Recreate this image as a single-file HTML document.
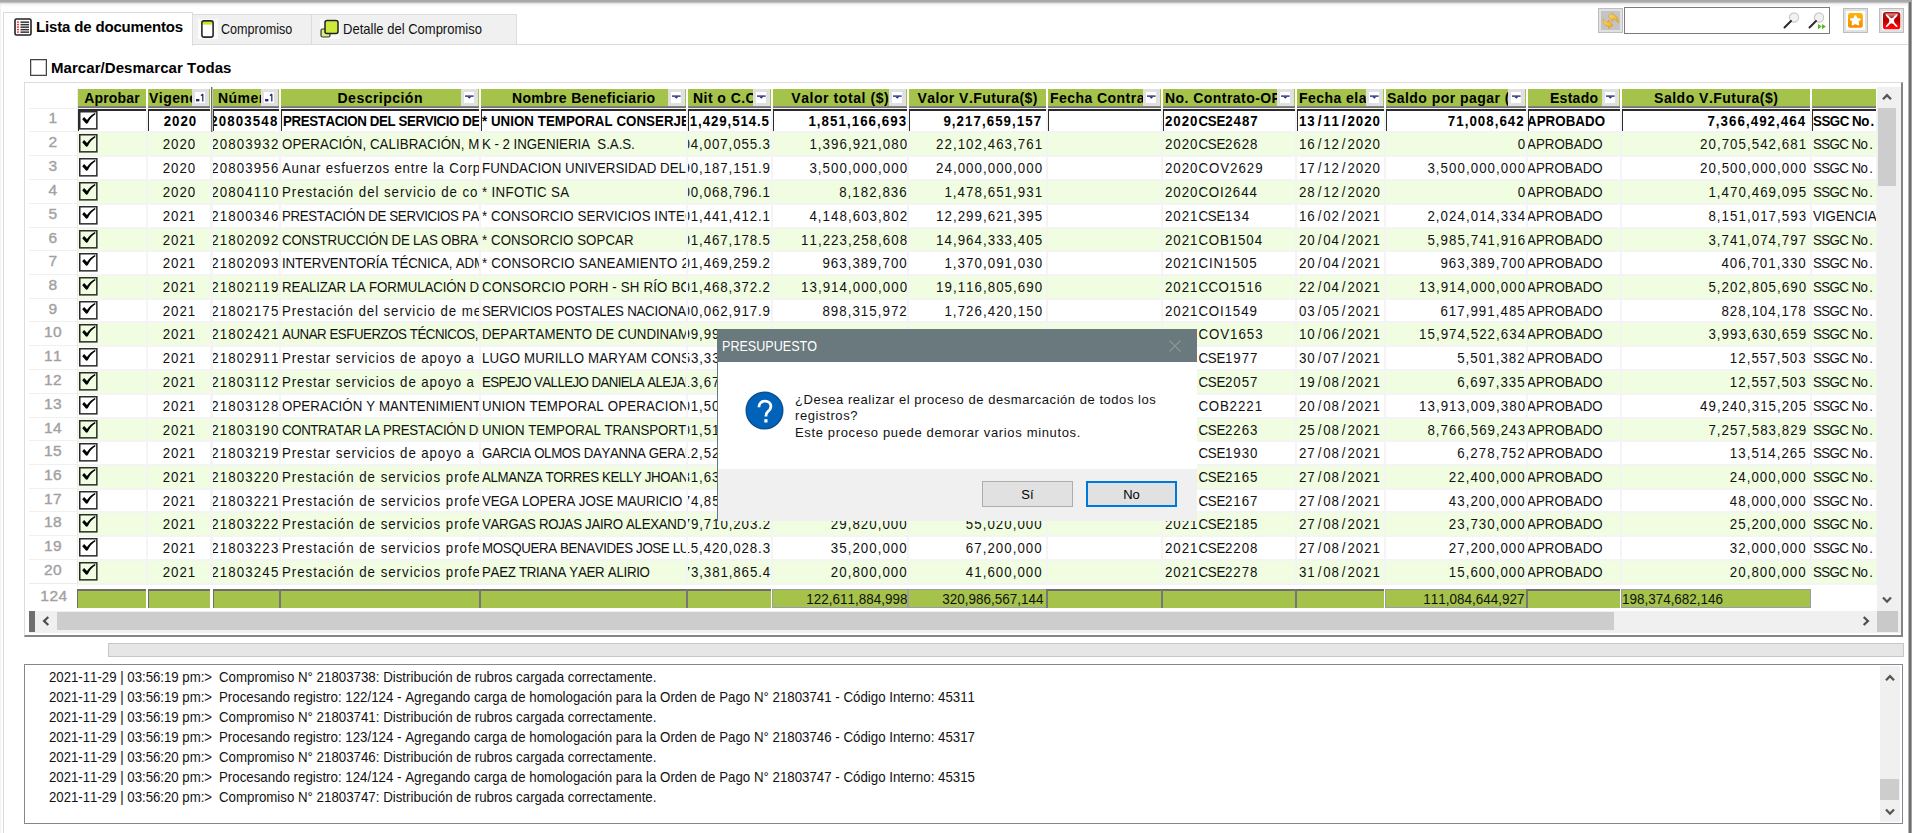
<!DOCTYPE html>
<html><head><meta charset="utf-8"><title>Presupuesto</title>
<style>
html,body{margin:0;padding:0;}
body{width:1912px;height:833px;overflow:hidden;background:#fff;position:relative;font-family:"Liberation Sans",sans-serif;font-size:14px;color:#000;font-kerning:none;font-variant-ligatures:none;}
div,span{position:absolute;box-sizing:border-box;white-space:pre;}
.c{overflow:hidden;}
.t{font-size:14.3px;line-height:22px;top:0;height:22px;color:#111;transform:scaleX(.93);transform-origin:0 50%;}
.b{font-weight:bold;color:#000;}
.h{font-weight:bold;font-size:14px;line-height:17px;top:1px;height:16px;}
.n{font-size:15px;transform-origin:0 50%;transform:scaleX(.885);color:#111;}
.rn{color:#a0a0a0;font-size:15.5px;line-height:22px;text-align:center;letter-spacing:.5px;-webkit-text-stroke:.4px #a4a4a4;margin-top:-1.6px;}
u{text-decoration:none;}
svg{position:absolute;overflow:visible;}
</style></head><body>

<div style="left:0px;top:0px;width:1912px;height:4px;background:linear-gradient(#a9a9a9 0,#a9a9a9 45%,#f4f4f4 100%);"></div>
<div style="left:0px;top:4px;width:1912px;height:2px;background:#f7f7f7;"></div>
<div style="left:1908px;top:2px;width:4px;height:831px;background:linear-gradient(to right,#b4b4b4 0,#b4b4b4 1px,#6f6f6f 1px,#6f6f6f 3px,#a2a2a2 3px);"></div>
<div style="left:0px;top:4px;width:1px;height:829px;background:#f1f1f1;"></div>
<div style="left:3px;top:44px;width:1905px;height:789px;border:1px solid #dcdcdc;border-bottom:none;border-right:none;background:#fff;"></div>
<div style="left:3px;top:12px;width:190px;height:34px;border:1px solid #dcdcdc;border-bottom:none;background:#fff;"></div>
<div style="left:193px;top:14px;width:119px;height:31px;background:#f0f0f0;border:1px solid #dcdcdc;border-left:none;"></div>
<div style="left:312px;top:14px;width:205px;height:31px;background:#f0f0f0;border:1px solid #dcdcdc;border-left:none;"></div>
<svg style="left:14px;top:18px" width="18" height="18" viewBox="0 0 18 18"><rect x="1" y="1" width="16" height="16" rx="1.5" fill="#fff" stroke="#222" stroke-width="1.6"/><rect x="3" y="3.4" width="2" height="1.4" fill="#f33"/><rect x="6.5" y="3.4" width="8.5" height="1.5" fill="#333"/><rect x="3" y="5.9" width="2" height="1.4" fill="#f33"/><rect x="6.5" y="5.9" width="8.5" height="1.5" fill="#333"/><rect x="3" y="8.4" width="2" height="1.4" fill="#f33"/><rect x="6.5" y="8.4" width="8.5" height="1.5" fill="#333"/><rect x="3" y="10.9" width="2" height="1.4" fill="#f33"/><rect x="6.5" y="10.9" width="8.5" height="1.5" fill="#333"/><rect x="3" y="13.4" width="2" height="1.4" fill="#f33"/><rect x="6.5" y="13.4" width="8.5" height="1.5" fill="#333"/></svg>
<span style="left:36px;top:16px;font-weight:bold;font-size:15px;line-height:20px;letter-spacing:-0.159px;margin-top:.5px;">Lista de documentos</span>
<div style="left:198px;top:19px;width:20px;height:20px;background:#fbfbfb;"></div>
<svg style="left:201px;top:20px" width="13" height="18" viewBox="0 0 13 18"><rect x=".9" y=".9" width="11.2" height="16.2" rx="2" fill="#fff" stroke="#262626" stroke-width="1.6"/><rect x="2" y="2" width="9" height="2.6" fill="#c6e81e"/></svg>
<span class="n" style="left:221px;top:19.4px;line-height:20px;transform:scaleX(.838);">Compromiso</span>
<div style="left:320px;top:19px;width:20px;height:20px;background:#fbfbfb;"></div>
<svg style="left:320px;top:19px" width="20" height="20" viewBox="0 0 20 20"><rect x="1" y="10" width="9" height="8" rx="1.5" fill="#d9ee80" stroke="#333" stroke-width="1.2"/><rect x="5" y="1.5" width="13" height="13" rx="2" fill="#cdea3a" stroke="#222" stroke-width="1.5"/></svg>
<span class="n" style="left:343px;top:19.4px;line-height:20px;transform:scaleX(.868);">Detalle del Compromiso</span>
<div style="left:1598px;top:8px;width:25px;height:25px;background:#c4c4c4;border:3px solid #e1e1e1;outline:1px solid #bdbdbd;outline-offset:-1px;"></div>
<svg style="left:1602px;top:12px" width="17" height="17" viewBox="0 0 17 17"><defs><linearGradient id="gg" x1="0" y1="0" x2="1" y2="1"><stop offset="0" stop-color="#ffe27a"/><stop offset="1" stop-color="#e8a21a"/></linearGradient></defs><path d="M6.3 4.2 L10.6 .9 L10.6 3 C13.8 3 16.3 5.6 16.2 10.8 C14.6 8.2 12.8 7.2 10.6 7.2 L10.6 9.4 Z" fill="url(#gg)" stroke="#d9961a" stroke-width=".6"/><path d="M10.9 13.2 L6.6 16.5 L6.6 14.4 C3.4 14.4 .9 11.8 1 6.6 C2.6 9.2 4.4 10.2 6.6 10.2 L6.6 8 Z" fill="url(#gg)" stroke="#d9961a" stroke-width=".6"/></svg>
<div style="left:1624px;top:7px;width:206px;height:27px;background:#fff;border:1px solid #7a7a7a;"></div>
<svg style="left:1782px;top:11px" width="22" height="20" viewBox="0 0 22 20"><circle cx="12" cy="6.5" r="4.6" fill="#f1f1f1" stroke="#c9c9c9" stroke-width="1.2"/><path d="M9 10 L2.5 16.5" stroke="#2a2a2a" stroke-width="2" stroke-linecap="round"/></svg>
<svg style="left:1807px;top:11px" width="22" height="20" viewBox="0 0 22 20"><circle cx="12" cy="6.5" r="4.6" fill="#f1f1f1" stroke="#c9c9c9" stroke-width="1.2"/><path d="M9 10 L2.5 16.5" stroke="#2a2a2a" stroke-width="2" stroke-linecap="round"/></svg>
<svg style="left:1818px;top:24px" width="8" height="6" viewBox="0 0 8 6"><path d="M0 0 L3.8 2.6 L0 5.2 Z M4 0 L7.8 2.6 L4 5.2 Z" fill="#59b81c"/></svg>
<div style="left:1843px;top:8px;width:25px;height:25px;background:#fff;border:3px solid #e1e1e1;outline:1px solid #bdbdbd;outline-offset:-1px;"></div>
<svg style="left:1848px;top:13px" width="15" height="15" viewBox="0 0 15 15"><defs><linearGradient id="og" x1="0" y1="0" x2="0" y2="1"><stop offset="0" stop-color="#fdb608"/><stop offset="1" stop-color="#fb8800"/></linearGradient></defs><rect width="14.8" height="14.8" rx="2.2" fill="url(#og)"/><path d="M7.4 3.2 L8.7 6 L11.8 6.3 L9.6 8.4 L10.2 11.4 L7.4 9.9 L4.6 11.4 L5.2 8.4 L3 6.3 L6.1 6 Z" fill="#fbfffd" stroke="#fbfffd" stroke-width="2" stroke-linejoin="round"/></svg>
<div style="left:1879px;top:8px;width:25px;height:25px;background:#fff;border:3px solid #e1e1e1;outline:1px solid #bdbdbd;outline-offset:-1px;"></div>
<svg style="left:1883px;top:12px" width="17.3" height="17.3" viewBox="0 0 17.3 17.3"><defs><linearGradient id="rg" x1="0" y1="0" x2="0" y2="1"><stop offset="0" stop-color="#b51616"/><stop offset=".45" stop-color="#b00000"/><stop offset=".75" stop-color="#f40000"/><stop offset="1" stop-color="#ff0a0a"/></linearGradient><linearGradient id="gl" x1="0" y1="0" x2="0" y2="1"><stop offset="0" stop-color="#fff" stop-opacity=".55"/><stop offset="1" stop-color="#fff" stop-opacity=".12"/></linearGradient></defs><rect width="17.3" height="17.3" rx="2.6" fill="url(#rg)"/><path d="M2 1.4 H15.3 L12.6 5.6 H4.7 Z" fill="url(#gl)"/><path d="M3.5 3 Q8.65 10.8 13.8 3 Q6.5 8.65 13.8 14.3 Q8.65 6.5 3.5 14.3 Q10.8 8.65 3.5 3 Z" fill="#fff" stroke="#fff" stroke-width="1.5" stroke-linejoin="round"/></svg>
<div style="left:30px;top:59px;width:17px;height:17px;background:#fff;border:1px solid #444;box-shadow:inset 0 0 0 .5px #999;"></div>
<span style="left:51px;top:57.5px;font-weight:bold;font-size:15px;line-height:20px;letter-spacing:0.056px;">Marcar/Desmarcar Todas</span>
<div style="left:24px;top:82px;width:1879px;height:555px;border:1px solid #dcdcdc;border-bottom:2px solid #858585;border-right:2px solid #858585;background:#fff;"></div>
<div style="left:29px;top:108px;width:1848px;height:477px;background:#f4f4f4;"></div>
<div style="left:29px;top:108px;width:48px;height:477px;background:#fff;"></div>
<div style="left:78px;top:89px;width:68px;height:17px;background:#a5c34a;overflow:hidden;"><span class="h" style="left:0;width:68px;text-align:center;overflow:hidden;letter-spacing:0.165px;text-indent:0.165px;">Aprobar</span></div>
<div style="left:78px;top:106px;width:68px;height:2px;background:linear-gradient(#8a8a8a,#6c6c6c);"></div>
<div style="left:148px;top:89px;width:62px;height:17px;background:#a5c34a;overflow:hidden;"><span class="h" style="left:1px;width:44px;overflow:hidden;letter-spacing:0.45px;">Vigencia</span><div style="left:44px;top:0px;width:17px;height:17px;background:#fff;border:3px solid #e0e0e0;border-right-width:4px;"></div><svg style="left:48px;top:4px" width="10" height="10" viewBox="0 0 10 10"><rect x="0" y="6" width="3.4" height="2.4" fill="#23307f"/><path d="M6.8 1 V8.6 M5 2.8 L6.8 1" stroke="#23307f" stroke-width="1.3" fill="none"/></svg></div>
<div style="left:148px;top:106px;width:62px;height:2px;background:linear-gradient(#8a8a8a,#6c6c6c);"></div>
<div style="left:213px;top:89px;width:66px;height:17px;background:#a5c34a;overflow:hidden;"><span class="h" style="left:5px;width:44px;overflow:hidden;letter-spacing:0.45px;">Número</span><div style="left:48px;top:0px;width:17px;height:17px;background:#fff;border:3px solid #e0e0e0;border-right-width:4px;"></div><svg style="left:52px;top:4px" width="10" height="10" viewBox="0 0 10 10"><rect x="0" y="6" width="3.4" height="2.4" fill="#23307f"/><path d="M6.8 1 V8.6 M5 2.8 L6.8 1" stroke="#23307f" stroke-width="1.3" fill="none"/></svg></div>
<div style="left:213px;top:106px;width:66px;height:2px;background:linear-gradient(#8a8a8a,#6c6c6c);"></div>
<div style="left:281px;top:89px;width:198px;height:17px;background:#a5c34a;overflow:hidden;"><span class="h" style="left:0;width:198px;text-align:center;overflow:hidden;letter-spacing:0.478px;text-indent:0.478px;">Descripción</span><div style="left:180px;top:0px;width:17px;height:17px;background:#fff;border:3px solid #e0e0e0;border-right-width:4px;"></div><svg style="left:184px;top:6px" width="9" height="6" viewBox="0 0 9 6"><path d="M0 .4 H8.6 V1.8 H0 Z" fill="#23307f"/><path d="M2.3 1.8 H6.3 L4.3 3.8 Z" fill="#23307f"/></svg></div>
<div style="left:281px;top:106px;width:198px;height:2px;background:linear-gradient(#8a8a8a,#6c6c6c);"></div>
<div style="left:481px;top:89px;width:205px;height:17px;background:#a5c34a;overflow:hidden;"><span class="h" style="left:0;width:205px;text-align:center;overflow:hidden;letter-spacing:0.341px;text-indent:0.341px;">Nombre Beneficiario</span><div style="left:187px;top:0px;width:17px;height:17px;background:#fff;border:3px solid #e0e0e0;border-right-width:4px;"></div><svg style="left:191px;top:6px" width="9" height="6" viewBox="0 0 9 6"><path d="M0 .4 H8.6 V1.8 H0 Z" fill="#23307f"/><path d="M2.3 1.8 H6.3 L4.3 3.8 Z" fill="#23307f"/></svg></div>
<div style="left:481px;top:106px;width:205px;height:2px;background:linear-gradient(#8a8a8a,#6c6c6c);"></div>
<div style="left:688px;top:89px;width:83px;height:17px;background:#a5c34a;overflow:hidden;"><span class="h" style="left:5px;width:61px;overflow:hidden;letter-spacing:0.45px;">Nit o C.C</span><div style="left:65px;top:0px;width:17px;height:17px;background:#fff;border:3px solid #e0e0e0;border-right-width:4px;"></div><svg style="left:69px;top:6px" width="9" height="6" viewBox="0 0 9 6"><path d="M0 .4 H8.6 V1.8 H0 Z" fill="#23307f"/><path d="M2.3 1.8 H6.3 L4.3 3.8 Z" fill="#23307f"/></svg></div>
<div style="left:688px;top:106px;width:83px;height:2px;background:linear-gradient(#8a8a8a,#6c6c6c);"></div>
<div style="left:773px;top:89px;width:134px;height:17px;background:#a5c34a;overflow:hidden;"><span class="h" style="left:0;width:134px;text-align:center;overflow:hidden;letter-spacing:0.57px;text-indent:0.57px;">Valor total ($)</span><div style="left:116px;top:0px;width:17px;height:17px;background:#fff;border:3px solid #e0e0e0;border-right-width:4px;"></div><svg style="left:120px;top:6px" width="9" height="6" viewBox="0 0 9 6"><path d="M0 .4 H8.6 V1.8 H0 Z" fill="#23307f"/><path d="M2.3 1.8 H6.3 L4.3 3.8 Z" fill="#23307f"/></svg></div>
<div style="left:773px;top:106px;width:134px;height:2px;background:linear-gradient(#8a8a8a,#6c6c6c);"></div>
<div style="left:909px;top:89px;width:137px;height:17px;background:#a5c34a;overflow:hidden;"><span class="h" style="left:0;width:137px;text-align:center;overflow:hidden;letter-spacing:0.45px;text-indent:0.45px;">Valor V.Futura($)</span></div>
<div style="left:909px;top:106px;width:137px;height:2px;background:linear-gradient(#8a8a8a,#6c6c6c);"></div>
<div style="left:1048px;top:89px;width:113px;height:17px;background:#a5c34a;overflow:hidden;"><span class="h" style="left:2px;width:94px;overflow:hidden;letter-spacing:0.45px;">Fecha Contrato</span><div style="left:95px;top:0px;width:17px;height:17px;background:#fff;border:3px solid #e0e0e0;border-right-width:4px;"></div><svg style="left:99px;top:6px" width="9" height="6" viewBox="0 0 9 6"><path d="M0 .4 H8.6 V1.8 H0 Z" fill="#23307f"/><path d="M2.3 1.8 H6.3 L4.3 3.8 Z" fill="#23307f"/></svg></div>
<div style="left:1048px;top:106px;width:113px;height:2px;background:linear-gradient(#8a8a8a,#6c6c6c);"></div>
<div style="left:1163px;top:89px;width:132px;height:17px;background:#a5c34a;overflow:hidden;"><span class="h" style="left:2px;width:113px;overflow:hidden;letter-spacing:0.45px;">No. Contrato-OP</span><div style="left:114px;top:0px;width:17px;height:17px;background:#fff;border:3px solid #e0e0e0;border-right-width:4px;"></div><svg style="left:118px;top:6px" width="9" height="6" viewBox="0 0 9 6"><path d="M0 .4 H8.6 V1.8 H0 Z" fill="#23307f"/><path d="M2.3 1.8 H6.3 L4.3 3.8 Z" fill="#23307f"/></svg></div>
<div style="left:1163px;top:106px;width:132px;height:2px;background:linear-gradient(#8a8a8a,#6c6c6c);"></div>
<div style="left:1297px;top:89px;width:87px;height:17px;background:#a5c34a;overflow:hidden;"><span class="h" style="left:2px;width:68px;overflow:hidden;letter-spacing:0.45px;">Fecha elab</span><div style="left:69px;top:0px;width:17px;height:17px;background:#fff;border:3px solid #e0e0e0;border-right-width:4px;"></div><svg style="left:73px;top:6px" width="9" height="6" viewBox="0 0 9 6"><path d="M0 .4 H8.6 V1.8 H0 Z" fill="#23307f"/><path d="M2.3 1.8 H6.3 L4.3 3.8 Z" fill="#23307f"/></svg></div>
<div style="left:1297px;top:106px;width:87px;height:2px;background:linear-gradient(#8a8a8a,#6c6c6c);"></div>
<div style="left:1386px;top:89px;width:140px;height:17px;background:#a5c34a;overflow:hidden;"><span class="h" style="left:1px;width:122px;overflow:hidden;letter-spacing:0.45px;">Saldo por pagar ($)</span><div style="left:122px;top:0px;width:17px;height:17px;background:#fff;border:3px solid #e0e0e0;border-right-width:4px;"></div><svg style="left:126px;top:6px" width="9" height="6" viewBox="0 0 9 6"><path d="M0 .4 H8.6 V1.8 H0 Z" fill="#23307f"/><path d="M2.3 1.8 H6.3 L4.3 3.8 Z" fill="#23307f"/></svg></div>
<div style="left:1386px;top:106px;width:140px;height:2px;background:linear-gradient(#8a8a8a,#6c6c6c);"></div>
<div style="left:1528px;top:89px;width:92px;height:17px;background:#a5c34a;overflow:hidden;"><span class="h" style="left:0;width:92px;text-align:center;overflow:hidden;letter-spacing:0.271px;text-indent:0.271px;">Estado</span><div style="left:74px;top:0px;width:17px;height:17px;background:#fff;border:3px solid #e0e0e0;border-right-width:4px;"></div><svg style="left:78px;top:6px" width="9" height="6" viewBox="0 0 9 6"><path d="M0 .4 H8.6 V1.8 H0 Z" fill="#23307f"/><path d="M2.3 1.8 H6.3 L4.3 3.8 Z" fill="#23307f"/></svg></div>
<div style="left:1528px;top:106px;width:92px;height:2px;background:linear-gradient(#8a8a8a,#6c6c6c);"></div>
<div style="left:1622px;top:89px;width:188px;height:17px;background:#a5c34a;overflow:hidden;"><span class="h" style="left:0;width:188px;text-align:center;overflow:hidden;letter-spacing:0.494px;text-indent:0.494px;">Saldo V.Futura($)</span></div>
<div style="left:1622px;top:106px;width:188px;height:2px;background:linear-gradient(#8a8a8a,#6c6c6c);"></div>
<div style="left:1812px;top:89px;width:64px;height:17px;background:#a5c34a;overflow:hidden;"><span class="h" style="left:0;width:64px;text-align:center;overflow:hidden;letter-spacing:0.45px;text-indent:0.45px;"></span></div>
<div style="left:1812px;top:106px;width:64px;height:2px;background:linear-gradient(#8a8a8a,#6c6c6c);"></div>
<div style="left:211px;top:87px;width:1px;height:45px;background:#6c6c6c;"></div>
<div style="left:212px;top:87px;width:1px;height:45px;background:#c4c4c4;"></div>
<div style="left:29px;top:108px;width:48px;height:1px;background:#f0f0f0;"></div>
<span class="rn" style="left:29px;top:109px;width:48px;height:22px;">1</span>
<div class="c" style="left:78px;top:109px;width:68px;height:22px;background:#fff;border-top:2px solid #2a2a2a;border-left:1px solid #2a2a2a;"></div>
<svg style="left:79px;top:110.5px" width="18.6" height="18.6" viewBox="0 0 18.6 18.6"><rect x=".75" y=".75" width="17.1" height="17.1" fill="#fff" stroke="#2b2b2b" stroke-width="1.5"/><path d="M5.1 5.9 L3.2 8.3 L7.2 12.7 L8.8 12.3 C10.6 8.4 13 5.4 16.7 3 L15.8 2 C12.6 3.7 10 6 8 9 Z" fill="#000"/></svg>
<div class="c" style="left:148px;top:109px;width:62px;height:22px;background:#fff;border-top:2px solid #2a2a2a;border-left:1px solid #2a2a2a;"><span class="t b" style="left:0;width:62px;text-align:center;top:-1px;letter-spacing:1.047px;text-indent:1.047px;transform-origin:50% 50%;">2020</span></div>
<div class="c" style="left:213px;top:109px;width:66px;height:22px;background:#fff;border-top:2px solid #2a2a2a;border-left:1px solid #2a2a2a;"><span class="t b" style="right:1.50px;top:-1px;letter-spacing:1.227px;margin-right:-1.227px;transform-origin:100% 50%;">20803548</span></div>
<div class="c" style="left:281px;top:109px;width:198px;height:22px;background:#fff;border-top:2px solid #2a2a2a;border-left:1px solid #2a2a2a;"><span class="t b" style="left:1px;top:-1px;letter-spacing:-0.409px;">PRESTACION DEL SERVICIO DE CONSERJERIA</span></div>
<div class="c" style="left:481px;top:109px;width:205px;height:22px;background:#fff;border-top:2px solid #2a2a2a;border-left:1px solid #2a2a2a;"><span class="t b" style="left:-0.5px;top:-1px;letter-spacing:0.044px;">* UNION TEMPORAL CONSERJES</span></div>
<div class="c" style="left:688px;top:109px;width:83px;height:22px;background:#fff;border-top:2px solid #2a2a2a;border-left:1px solid #2a2a2a;"><span class="t b" style="right:2.00px;top:-1px;letter-spacing:0.956px;margin-right:-0.956px;transform-origin:100% 50%;">901,429,514.5</span></div>
<div class="c" style="left:773px;top:109px;width:134px;height:22px;background:#fff;border-top:2px solid #2a2a2a;border-left:1px solid #2a2a2a;"><span class="t b" style="right:1.00px;top:-1px;letter-spacing:1.129px;margin-right:-1.129px;transform-origin:100% 50%;">1,851,166,693</span></div>
<div class="c" style="left:909px;top:109px;width:137px;height:22px;background:#fff;border-top:2px solid #2a2a2a;border-left:1px solid #2a2a2a;"><span class="t b" style="right:5.00px;top:-1px;letter-spacing:1.129px;margin-right:-1.129px;transform-origin:100% 50%;">9,217,659,157</span></div>
<div class="c" style="left:1048px;top:109px;width:113px;height:22px;background:#fff;border-top:2px solid #2a2a2a;border-left:1px solid #2a2a2a;"><span class="t b" style="left:0px;top:-1px;letter-spacing:0px;"></span></div>
<div class="c" style="left:1163px;top:109px;width:132px;height:22px;background:#fff;border-top:2px solid #2a2a2a;border-left:1px solid #2a2a2a;"><span class="t b" style="left:1px;top:-1px;letter-spacing:1.047px;"><u style="letter-spacing:1.047px">2020</u><u style="letter-spacing:-0.243px">CSE</u><u style="letter-spacing:1.047px">2487</u></span></div>
<div class="c" style="left:1297px;top:109px;width:87px;height:22px;background:#fff;border-top:2px solid #2a2a2a;border-left:1px solid #2a2a2a;"><span class="t b" style="left:1px;top:-1px;letter-spacing:1.047px;"><u style="letter-spacing:1.047px">13</u><u style="letter-spacing:0;margin:0 2.046px">/</u><u style="letter-spacing:1.047px">11</u><u style="letter-spacing:0;margin:0 2.046px">/</u><u style="letter-spacing:1.047px">2020</u></span></div>
<div class="c" style="left:1386px;top:109px;width:140px;height:22px;background:#fff;border-top:2px solid #2a2a2a;border-left:1px solid #2a2a2a;"><span class="t b" style="right:2.00px;top:-1px;letter-spacing:1.118px;margin-right:-1.118px;transform-origin:100% 50%;">71,008,642</span></div>
<div class="c" style="left:1528px;top:109px;width:92px;height:22px;background:#fff;border-top:2px solid #2a2a2a;border-left:1px solid #2a2a2a;"><span class="t b" style="left:-2px;top:-1px;letter-spacing:0.069px;">APROBADO</span></div>
<div class="c" style="left:1622px;top:109px;width:188px;height:22px;background:#fff;border-top:2px solid #2a2a2a;border-left:1px solid #2a2a2a;"><span class="t b" style="right:5.00px;top:-1px;letter-spacing:1.129px;margin-right:-1.129px;transform-origin:100% 50%;">7,366,492,464</span></div>
<div class="c" style="left:1812px;top:109px;width:64px;height:22px;background:#fff;border-top:2px solid #2a2a2a;border-left:1px solid #2a2a2a;"><span class="t b" style="left:0px;top:-1px;letter-spacing:1.204px;"><u style="letter-spacing:-0.499px">SSGC N</u><u style="letter-spacing:1.204px">o.</u></span></div>
<div style="left:29px;top:131px;width:48px;height:1px;background:#f0f0f0;"></div>
<span class="rn" style="left:29px;top:133px;width:48px;height:22px;">2</span>
<div class="c" style="left:78px;top:133px;width:68px;height:22px;background:#f0fde1;"></div>
<svg style="left:79px;top:134px" width="18.6" height="18.6" viewBox="0 0 18.6 18.6"><rect x=".75" y=".75" width="17.1" height="17.1" fill="#f0fde1" stroke="#2b2b2b" stroke-width="1.5"/><path d="M5.1 5.9 L3.2 8.3 L7.2 12.7 L8.8 12.3 C10.6 8.4 13 5.4 16.7 3 L15.8 2 C12.6 3.7 10 6 8 9 Z" fill="#000"/></svg>
<div class="c" style="left:148px;top:133px;width:62px;height:22px;background:#f0fde1;"><span class="t" style="left:0;width:62px;text-align:center;top:0px;letter-spacing:1.047px;text-indent:1.047px;transform-origin:50% 50%;">2020</span></div>
<div class="c" style="left:213px;top:133px;width:66px;height:22px;background:#f0fde1;"><span class="t" style="right:0.50px;top:0px;letter-spacing:1.227px;margin-right:-1.227px;transform-origin:100% 50%;">20803932</span></div>
<div class="c" style="left:281px;top:133px;width:198px;height:22px;background:#f0fde1;"><span class="t" style="left:1px;top:0px;letter-spacing:0.072px;">OPERACIÓN, CALIBRACIÓN, MANTENIMIENTO</span></div>
<div class="c" style="left:481px;top:133px;width:205px;height:22px;background:#f0fde1;"><span class="t" style="left:0.5px;top:0px;letter-spacing:-0.041px;">K - 2 INGENIERIA  S.A.S.</span></div>
<div class="c" style="left:688px;top:133px;width:83px;height:22px;background:#f0fde1;"><span class="t" style="right:1.00px;top:0px;letter-spacing:0.956px;margin-right:-0.956px;transform-origin:100% 50%;">804,007,055.3</span></div>
<div class="c" style="left:773px;top:133px;width:134px;height:22px;background:#f0fde1;"><span class="t" style="right:0.00px;top:0px;letter-spacing:1.129px;margin-right:-1.129px;transform-origin:100% 50%;">1,396,921,080</span></div>
<div class="c" style="left:909px;top:133px;width:137px;height:22px;background:#f0fde1;"><span class="t" style="right:4.00px;top:0px;letter-spacing:1.123px;margin-right:-1.123px;transform-origin:100% 50%;">22,102,463,761</span></div>
<div class="c" style="left:1048px;top:133px;width:113px;height:22px;background:#f0fde1;"><span class="t" style="left:1px;top:0px;letter-spacing:0px;"></span></div>
<div class="c" style="left:1163px;top:133px;width:132px;height:22px;background:#f0fde1;"><span class="t" style="left:2px;top:0px;letter-spacing:1.047px;"><u style="letter-spacing:1.047px">2020</u><u style="letter-spacing:-0.3px">CSE</u><u style="letter-spacing:1.047px">2628</u></span></div>
<div class="c" style="left:1297px;top:133px;width:87px;height:22px;background:#f0fde1;"><span class="t" style="left:2px;top:0px;letter-spacing:1.047px;"><u style="letter-spacing:1.047px">16</u><u style="letter-spacing:0;margin:0 2.046px">/</u><u style="letter-spacing:1.047px">12</u><u style="letter-spacing:0;margin:0 2.046px">/</u><u style="letter-spacing:1.047px">2020</u></span></div>
<div class="c" style="left:1386px;top:133px;width:140px;height:22px;background:#f0fde1;"><span class="t" style="right:1.00px;top:0px;letter-spacing:1.047px;margin-right:-1.047px;transform-origin:100% 50%;">0</span></div>
<div class="c" style="left:1528px;top:133px;width:92px;height:22px;background:#f0fde1;"><span class="t" style="left:-1px;top:0px;letter-spacing:0.04px;">APROBADO</span></div>
<div class="c" style="left:1622px;top:133px;width:188px;height:22px;background:#f0fde1;"><span class="t" style="right:4.00px;top:0px;letter-spacing:1.123px;margin-right:-1.123px;transform-origin:100% 50%;">20,705,542,681</span></div>
<div class="c" style="left:1812px;top:133px;width:64px;height:22px;background:#f0fde1;"><span class="t" style="left:1px;top:0px;letter-spacing:1.502px;"><u style="letter-spacing:-0.62px">SSGC N</u><u style="letter-spacing:1.502px">o.</u></span></div>
<div style="left:29px;top:155px;width:48px;height:1px;background:#f0f0f0;"></div>
<span class="rn" style="left:29px;top:157px;width:48px;height:22px;">3</span>
<div class="c" style="left:78px;top:157px;width:68px;height:22px;background:#fff;"></div>
<svg style="left:79px;top:158px" width="18.6" height="18.6" viewBox="0 0 18.6 18.6"><rect x=".75" y=".75" width="17.1" height="17.1" fill="#fff" stroke="#2b2b2b" stroke-width="1.5"/><path d="M5.1 5.9 L3.2 8.3 L7.2 12.7 L8.8 12.3 C10.6 8.4 13 5.4 16.7 3 L15.8 2 C12.6 3.7 10 6 8 9 Z" fill="#000"/></svg>
<div class="c" style="left:148px;top:157px;width:62px;height:22px;background:#fff;"><span class="t" style="left:0;width:62px;text-align:center;top:0px;letter-spacing:1.047px;text-indent:1.047px;transform-origin:50% 50%;">2020</span></div>
<div class="c" style="left:213px;top:157px;width:66px;height:22px;background:#fff;"><span class="t" style="right:0.50px;top:0px;letter-spacing:1.227px;margin-right:-1.227px;transform-origin:100% 50%;">20803956</span></div>
<div class="c" style="left:281px;top:157px;width:198px;height:22px;background:#fff;"><span class="t" style="left:1px;top:0px;letter-spacing:0.8px;">Aunar esfuerzos entre la Corporación</span></div>
<div class="c" style="left:481px;top:157px;width:205px;height:22px;background:#fff;"><span class="t" style="left:0.5px;top:0px;letter-spacing:0.034px;">FUNDACION UNIVERSIDAD DEL NORTE</span></div>
<div class="c" style="left:688px;top:157px;width:83px;height:22px;background:#fff;"><span class="t" style="right:1.00px;top:0px;letter-spacing:0.956px;margin-right:-0.956px;transform-origin:100% 50%;">890,187,151.9</span></div>
<div class="c" style="left:773px;top:157px;width:134px;height:22px;background:#fff;"><span class="t" style="right:0.00px;top:0px;letter-spacing:1.129px;margin-right:-1.129px;transform-origin:100% 50%;">3,500,000,000</span></div>
<div class="c" style="left:909px;top:157px;width:137px;height:22px;background:#fff;"><span class="t" style="right:4.00px;top:0px;letter-spacing:1.123px;margin-right:-1.123px;transform-origin:100% 50%;">24,000,000,000</span></div>
<div class="c" style="left:1048px;top:157px;width:113px;height:22px;background:#fff;"><span class="t" style="left:1px;top:0px;letter-spacing:0px;"></span></div>
<div class="c" style="left:1163px;top:157px;width:132px;height:22px;background:#fff;"><span class="t" style="left:2px;top:0px;letter-spacing:1.047px;"><u style="letter-spacing:1.047px">2020</u><u style="letter-spacing:0.98px">COV</u><u style="letter-spacing:1.047px">2629</u></span></div>
<div class="c" style="left:1297px;top:157px;width:87px;height:22px;background:#fff;"><span class="t" style="left:2px;top:0px;letter-spacing:1.047px;"><u style="letter-spacing:1.047px">17</u><u style="letter-spacing:0;margin:0 2.046px">/</u><u style="letter-spacing:1.047px">12</u><u style="letter-spacing:0;margin:0 2.046px">/</u><u style="letter-spacing:1.047px">2020</u></span></div>
<div class="c" style="left:1386px;top:157px;width:140px;height:22px;background:#fff;"><span class="t" style="right:1.00px;top:0px;letter-spacing:1.129px;margin-right:-1.129px;transform-origin:100% 50%;">3,500,000,000</span></div>
<div class="c" style="left:1528px;top:157px;width:92px;height:22px;background:#fff;"><span class="t" style="left:-1px;top:0px;letter-spacing:0.04px;">APROBADO</span></div>
<div class="c" style="left:1622px;top:157px;width:188px;height:22px;background:#fff;"><span class="t" style="right:4.00px;top:0px;letter-spacing:1.123px;margin-right:-1.123px;transform-origin:100% 50%;">20,500,000,000</span></div>
<div class="c" style="left:1812px;top:157px;width:64px;height:22px;background:#fff;"><span class="t" style="left:1px;top:0px;letter-spacing:1.502px;"><u style="letter-spacing:-0.62px">SSGC N</u><u style="letter-spacing:1.502px">o.</u></span></div>
<div style="left:29px;top:179px;width:48px;height:1px;background:#f0f0f0;"></div>
<span class="rn" style="left:29px;top:181px;width:48px;height:22px;">4</span>
<div class="c" style="left:78px;top:181px;width:68px;height:22px;background:#f0fde1;"></div>
<svg style="left:79px;top:182px" width="18.6" height="18.6" viewBox="0 0 18.6 18.6"><rect x=".75" y=".75" width="17.1" height="17.1" fill="#f0fde1" stroke="#2b2b2b" stroke-width="1.5"/><path d="M5.1 5.9 L3.2 8.3 L7.2 12.7 L8.8 12.3 C10.6 8.4 13 5.4 16.7 3 L15.8 2 C12.6 3.7 10 6 8 9 Z" fill="#000"/></svg>
<div class="c" style="left:148px;top:181px;width:62px;height:22px;background:#f0fde1;"><span class="t" style="left:0;width:62px;text-align:center;top:0px;letter-spacing:1.047px;text-indent:1.047px;transform-origin:50% 50%;">2020</span></div>
<div class="c" style="left:213px;top:181px;width:66px;height:22px;background:#f0fde1;"><span class="t" style="right:0.50px;top:0px;letter-spacing:1.227px;margin-right:-1.227px;transform-origin:100% 50%;">20804110</span></div>
<div class="c" style="left:281px;top:181px;width:198px;height:22px;background:#f0fde1;"><span class="t" style="left:1px;top:0px;letter-spacing:1.009px;">Prestación del servicio de conectividad</span></div>
<div class="c" style="left:481px;top:181px;width:205px;height:22px;background:#f0fde1;"><span class="t" style="left:0.5px;top:0px;letter-spacing:0.359px;">* INFOTIC SA</span></div>
<div class="c" style="left:688px;top:181px;width:83px;height:22px;background:#f0fde1;"><span class="t" style="right:1.00px;top:0px;letter-spacing:0.956px;margin-right:-0.956px;transform-origin:100% 50%;">900,068,796.1</span></div>
<div class="c" style="left:773px;top:181px;width:134px;height:22px;background:#f0fde1;"><span class="t" style="right:0.00px;top:0px;letter-spacing:1.126px;margin-right:-1.126px;transform-origin:100% 50%;">8,182,836</span></div>
<div class="c" style="left:909px;top:181px;width:137px;height:22px;background:#f0fde1;"><span class="t" style="right:4.00px;top:0px;letter-spacing:1.129px;margin-right:-1.129px;transform-origin:100% 50%;">1,478,651,931</span></div>
<div class="c" style="left:1048px;top:181px;width:113px;height:22px;background:#f0fde1;"><span class="t" style="left:1px;top:0px;letter-spacing:0px;"></span></div>
<div class="c" style="left:1163px;top:181px;width:132px;height:22px;background:#f0fde1;"><span class="t" style="left:2px;top:0px;letter-spacing:1.047px;"><u style="letter-spacing:1.047px">2020</u><u style="letter-spacing:0.811px">COI</u><u style="letter-spacing:1.047px">2644</u></span></div>
<div class="c" style="left:1297px;top:181px;width:87px;height:22px;background:#f0fde1;"><span class="t" style="left:2px;top:0px;letter-spacing:1.047px;"><u style="letter-spacing:1.047px">28</u><u style="letter-spacing:0;margin:0 2.046px">/</u><u style="letter-spacing:1.047px">12</u><u style="letter-spacing:0;margin:0 2.046px">/</u><u style="letter-spacing:1.047px">2020</u></span></div>
<div class="c" style="left:1386px;top:181px;width:140px;height:22px;background:#f0fde1;"><span class="t" style="right:1.00px;top:0px;letter-spacing:1.047px;margin-right:-1.047px;transform-origin:100% 50%;">0</span></div>
<div class="c" style="left:1528px;top:181px;width:92px;height:22px;background:#f0fde1;"><span class="t" style="left:-1px;top:0px;letter-spacing:0.04px;">APROBADO</span></div>
<div class="c" style="left:1622px;top:181px;width:188px;height:22px;background:#f0fde1;"><span class="t" style="right:4.00px;top:0px;letter-spacing:1.129px;margin-right:-1.129px;transform-origin:100% 50%;">1,470,469,095</span></div>
<div class="c" style="left:1812px;top:181px;width:64px;height:22px;background:#f0fde1;"><span class="t" style="left:1px;top:0px;letter-spacing:1.502px;"><u style="letter-spacing:-0.62px">SSGC N</u><u style="letter-spacing:1.502px">o.</u></span></div>
<div style="left:29px;top:203px;width:48px;height:1px;background:#f0f0f0;"></div>
<span class="rn" style="left:29px;top:205px;width:48px;height:22px;">5</span>
<div class="c" style="left:78px;top:205px;width:68px;height:22px;background:#fff;"></div>
<svg style="left:79px;top:206px" width="18.6" height="18.6" viewBox="0 0 18.6 18.6"><rect x=".75" y=".75" width="17.1" height="17.1" fill="#fff" stroke="#2b2b2b" stroke-width="1.5"/><path d="M5.1 5.9 L3.2 8.3 L7.2 12.7 L8.8 12.3 C10.6 8.4 13 5.4 16.7 3 L15.8 2 C12.6 3.7 10 6 8 9 Z" fill="#000"/></svg>
<div class="c" style="left:148px;top:205px;width:62px;height:22px;background:#fff;"><span class="t" style="left:0;width:62px;text-align:center;top:0px;letter-spacing:1.047px;text-indent:1.047px;transform-origin:50% 50%;">2021</span></div>
<div class="c" style="left:213px;top:205px;width:66px;height:22px;background:#fff;"><span class="t" style="right:0.50px;top:0px;letter-spacing:1.227px;margin-right:-1.227px;transform-origin:100% 50%;">21800346</span></div>
<div class="c" style="left:281px;top:205px;width:198px;height:22px;background:#fff;"><span class="t" style="left:1px;top:0px;letter-spacing:-0.38px;">PRESTACIÓN DE SERVICIOS PARA</span></div>
<div class="c" style="left:481px;top:205px;width:205px;height:22px;background:#fff;"><span class="t" style="left:0.5px;top:0px;letter-spacing:0.083px;">* CONSORCIO SERVICIOS INTEGRALES</span></div>
<div class="c" style="left:688px;top:205px;width:83px;height:22px;background:#fff;"><span class="t" style="right:1.00px;top:0px;letter-spacing:0.956px;margin-right:-0.956px;transform-origin:100% 50%;">901,441,412.1</span></div>
<div class="c" style="left:773px;top:205px;width:134px;height:22px;background:#fff;"><span class="t" style="right:0.00px;top:0px;letter-spacing:1.129px;margin-right:-1.129px;transform-origin:100% 50%;">4,148,603,802</span></div>
<div class="c" style="left:909px;top:205px;width:137px;height:22px;background:#fff;"><span class="t" style="right:4.00px;top:0px;letter-spacing:1.123px;margin-right:-1.123px;transform-origin:100% 50%;">12,299,621,395</span></div>
<div class="c" style="left:1048px;top:205px;width:113px;height:22px;background:#fff;"><span class="t" style="left:1px;top:0px;letter-spacing:0px;"></span></div>
<div class="c" style="left:1163px;top:205px;width:132px;height:22px;background:#fff;"><span class="t" style="left:2px;top:0px;letter-spacing:1.047px;"><u style="letter-spacing:1.047px">2021</u><u style="letter-spacing:-0.3px">CSE</u><u style="letter-spacing:1.047px">134</u></span></div>
<div class="c" style="left:1297px;top:205px;width:87px;height:22px;background:#fff;"><span class="t" style="left:2px;top:0px;letter-spacing:1.047px;"><u style="letter-spacing:1.047px">16</u><u style="letter-spacing:0;margin:0 2.046px">/</u><u style="letter-spacing:1.047px">02</u><u style="letter-spacing:0;margin:0 2.046px">/</u><u style="letter-spacing:1.047px">2021</u></span></div>
<div class="c" style="left:1386px;top:205px;width:140px;height:22px;background:#fff;"><span class="t" style="right:1.00px;top:0px;letter-spacing:1.129px;margin-right:-1.129px;transform-origin:100% 50%;">2,024,014,334</span></div>
<div class="c" style="left:1528px;top:205px;width:92px;height:22px;background:#fff;"><span class="t" style="left:-1px;top:0px;letter-spacing:0.04px;">APROBADO</span></div>
<div class="c" style="left:1622px;top:205px;width:188px;height:22px;background:#fff;"><span class="t" style="right:4.00px;top:0px;letter-spacing:1.129px;margin-right:-1.129px;transform-origin:100% 50%;">8,151,017,593</span></div>
<div class="c" style="left:1812px;top:205px;width:64px;height:22px;background:#fff;"><span class="t" style="left:1px;top:0px;letter-spacing:0.001px;">VIGENCIA</span></div>
<div style="left:29px;top:227px;width:48px;height:1px;background:#f0f0f0;"></div>
<span class="rn" style="left:29px;top:229px;width:48px;height:21px;">6</span>
<div class="c" style="left:78px;top:229px;width:68px;height:21px;background:#f0fde1;"></div>
<svg style="left:79px;top:230px" width="18.6" height="18.6" viewBox="0 0 18.6 18.6"><rect x=".75" y=".75" width="17.1" height="17.1" fill="#f0fde1" stroke="#2b2b2b" stroke-width="1.5"/><path d="M5.1 5.9 L3.2 8.3 L7.2 12.7 L8.8 12.3 C10.6 8.4 13 5.4 16.7 3 L15.8 2 C12.6 3.7 10 6 8 9 Z" fill="#000"/></svg>
<div class="c" style="left:148px;top:229px;width:62px;height:21px;background:#f0fde1;"><span class="t" style="left:0;width:62px;text-align:center;top:0px;letter-spacing:1.047px;text-indent:1.047px;transform-origin:50% 50%;">2021</span></div>
<div class="c" style="left:213px;top:229px;width:66px;height:21px;background:#f0fde1;"><span class="t" style="right:0.50px;top:0px;letter-spacing:1.227px;margin-right:-1.227px;transform-origin:100% 50%;">21802092</span></div>
<div class="c" style="left:281px;top:229px;width:198px;height:21px;background:#f0fde1;"><span class="t" style="left:1px;top:0px;letter-spacing:-0.224px;">CONSTRUCCIÓN DE LAS OBRAS</span></div>
<div class="c" style="left:481px;top:229px;width:205px;height:21px;background:#f0fde1;"><span class="t" style="left:0.5px;top:0px;letter-spacing:0.057px;">* CONSORCIO SOPCAR</span></div>
<div class="c" style="left:688px;top:229px;width:83px;height:21px;background:#f0fde1;"><span class="t" style="right:1.00px;top:0px;letter-spacing:0.956px;margin-right:-0.956px;transform-origin:100% 50%;">901,467,178.5</span></div>
<div class="c" style="left:773px;top:229px;width:134px;height:21px;background:#f0fde1;"><span class="t" style="right:0.00px;top:0px;letter-spacing:1.123px;margin-right:-1.123px;transform-origin:100% 50%;">11,223,258,608</span></div>
<div class="c" style="left:909px;top:229px;width:137px;height:21px;background:#f0fde1;"><span class="t" style="right:4.00px;top:0px;letter-spacing:1.123px;margin-right:-1.123px;transform-origin:100% 50%;">14,964,333,405</span></div>
<div class="c" style="left:1048px;top:229px;width:113px;height:21px;background:#f0fde1;"><span class="t" style="left:1px;top:0px;letter-spacing:0px;"></span></div>
<div class="c" style="left:1163px;top:229px;width:132px;height:21px;background:#f0fde1;"><span class="t" style="left:2px;top:0px;letter-spacing:1.047px;"><u style="letter-spacing:1.047px">2021</u><u style="letter-spacing:0.829px">COB</u><u style="letter-spacing:1.047px">1504</u></span></div>
<div class="c" style="left:1297px;top:229px;width:87px;height:21px;background:#f0fde1;"><span class="t" style="left:2px;top:0px;letter-spacing:1.047px;"><u style="letter-spacing:1.047px">20</u><u style="letter-spacing:0;margin:0 2.046px">/</u><u style="letter-spacing:1.047px">04</u><u style="letter-spacing:0;margin:0 2.046px">/</u><u style="letter-spacing:1.047px">2021</u></span></div>
<div class="c" style="left:1386px;top:229px;width:140px;height:21px;background:#f0fde1;"><span class="t" style="right:1.00px;top:0px;letter-spacing:1.129px;margin-right:-1.129px;transform-origin:100% 50%;">5,985,741,916</span></div>
<div class="c" style="left:1528px;top:229px;width:92px;height:21px;background:#f0fde1;"><span class="t" style="left:-1px;top:0px;letter-spacing:0.04px;">APROBADO</span></div>
<div class="c" style="left:1622px;top:229px;width:188px;height:21px;background:#f0fde1;"><span class="t" style="right:4.00px;top:0px;letter-spacing:1.129px;margin-right:-1.129px;transform-origin:100% 50%;">3,741,074,797</span></div>
<div class="c" style="left:1812px;top:229px;width:64px;height:21px;background:#f0fde1;"><span class="t" style="left:1px;top:0px;letter-spacing:1.502px;"><u style="letter-spacing:-0.62px">SSGC N</u><u style="letter-spacing:1.502px">o.</u></span></div>
<div style="left:29px;top:250px;width:48px;height:1px;background:#f0f0f0;"></div>
<span class="rn" style="left:29px;top:252px;width:48px;height:22px;">7</span>
<div class="c" style="left:78px;top:252px;width:68px;height:22px;background:#fff;"></div>
<svg style="left:79px;top:253px" width="18.6" height="18.6" viewBox="0 0 18.6 18.6"><rect x=".75" y=".75" width="17.1" height="17.1" fill="#fff" stroke="#2b2b2b" stroke-width="1.5"/><path d="M5.1 5.9 L3.2 8.3 L7.2 12.7 L8.8 12.3 C10.6 8.4 13 5.4 16.7 3 L15.8 2 C12.6 3.7 10 6 8 9 Z" fill="#000"/></svg>
<div class="c" style="left:148px;top:252px;width:62px;height:22px;background:#fff;"><span class="t" style="left:0;width:62px;text-align:center;top:0px;letter-spacing:1.047px;text-indent:1.047px;transform-origin:50% 50%;">2021</span></div>
<div class="c" style="left:213px;top:252px;width:66px;height:22px;background:#fff;"><span class="t" style="right:0.50px;top:0px;letter-spacing:1.227px;margin-right:-1.227px;transform-origin:100% 50%;">21802093</span></div>
<div class="c" style="left:281px;top:252px;width:198px;height:22px;background:#fff;"><span class="t" style="left:1px;top:0px;letter-spacing:-0.161px;">INTERVENTORÍA TÉCNICA, ADMINISTRATIVA</span></div>
<div class="c" style="left:481px;top:252px;width:205px;height:22px;background:#fff;"><span class="t" style="left:0.5px;top:0px;letter-spacing:0.195px;">* CONSORCIO SANEAMIENTO 2021</span></div>
<div class="c" style="left:688px;top:252px;width:83px;height:22px;background:#fff;"><span class="t" style="right:1.00px;top:0px;letter-spacing:0.956px;margin-right:-0.956px;transform-origin:100% 50%;">901,469,259.2</span></div>
<div class="c" style="left:773px;top:252px;width:134px;height:22px;background:#fff;"><span class="t" style="right:0.00px;top:0px;letter-spacing:1.112px;margin-right:-1.112px;transform-origin:100% 50%;">963,389,700</span></div>
<div class="c" style="left:909px;top:252px;width:137px;height:22px;background:#fff;"><span class="t" style="right:4.00px;top:0px;letter-spacing:1.129px;margin-right:-1.129px;transform-origin:100% 50%;">1,370,091,030</span></div>
<div class="c" style="left:1048px;top:252px;width:113px;height:22px;background:#fff;"><span class="t" style="left:1px;top:0px;letter-spacing:0px;"></span></div>
<div class="c" style="left:1163px;top:252px;width:132px;height:22px;background:#fff;"><span class="t" style="left:2px;top:0px;letter-spacing:1.047px;"><u style="letter-spacing:1.047px">2021</u><u style="letter-spacing:0.97px">CIN</u><u style="letter-spacing:1.047px">1505</u></span></div>
<div class="c" style="left:1297px;top:252px;width:87px;height:22px;background:#fff;"><span class="t" style="left:2px;top:0px;letter-spacing:1.047px;"><u style="letter-spacing:1.047px">20</u><u style="letter-spacing:0;margin:0 2.046px">/</u><u style="letter-spacing:1.047px">04</u><u style="letter-spacing:0;margin:0 2.046px">/</u><u style="letter-spacing:1.047px">2021</u></span></div>
<div class="c" style="left:1386px;top:252px;width:140px;height:22px;background:#fff;"><span class="t" style="right:1.00px;top:0px;letter-spacing:1.112px;margin-right:-1.112px;transform-origin:100% 50%;">963,389,700</span></div>
<div class="c" style="left:1528px;top:252px;width:92px;height:22px;background:#fff;"><span class="t" style="left:-1px;top:0px;letter-spacing:0.04px;">APROBADO</span></div>
<div class="c" style="left:1622px;top:252px;width:188px;height:22px;background:#fff;"><span class="t" style="right:4.00px;top:0px;letter-spacing:1.112px;margin-right:-1.112px;transform-origin:100% 50%;">406,701,330</span></div>
<div class="c" style="left:1812px;top:252px;width:64px;height:22px;background:#fff;"><span class="t" style="left:1px;top:0px;letter-spacing:1.502px;"><u style="letter-spacing:-0.62px">SSGC N</u><u style="letter-spacing:1.502px">o.</u></span></div>
<div style="left:29px;top:274px;width:48px;height:1px;background:#f0f0f0;"></div>
<span class="rn" style="left:29px;top:276px;width:48px;height:22px;">8</span>
<div class="c" style="left:78px;top:276px;width:68px;height:22px;background:#f0fde1;"></div>
<svg style="left:79px;top:277px" width="18.6" height="18.6" viewBox="0 0 18.6 18.6"><rect x=".75" y=".75" width="17.1" height="17.1" fill="#f0fde1" stroke="#2b2b2b" stroke-width="1.5"/><path d="M5.1 5.9 L3.2 8.3 L7.2 12.7 L8.8 12.3 C10.6 8.4 13 5.4 16.7 3 L15.8 2 C12.6 3.7 10 6 8 9 Z" fill="#000"/></svg>
<div class="c" style="left:148px;top:276px;width:62px;height:22px;background:#f0fde1;"><span class="t" style="left:0;width:62px;text-align:center;top:0px;letter-spacing:1.047px;text-indent:1.047px;transform-origin:50% 50%;">2021</span></div>
<div class="c" style="left:213px;top:276px;width:66px;height:22px;background:#f0fde1;"><span class="t" style="right:0.50px;top:0px;letter-spacing:1.227px;margin-right:-1.227px;transform-origin:100% 50%;">21802119</span></div>
<div class="c" style="left:281px;top:276px;width:198px;height:22px;background:#f0fde1;"><span class="t" style="left:1px;top:0px;letter-spacing:-0.14px;">REALIZAR LA FORMULACIÓN DEL</span></div>
<div class="c" style="left:481px;top:276px;width:205px;height:22px;background:#f0fde1;"><span class="t" style="left:0.5px;top:0px;letter-spacing:0.179px;">CONSORCIO PORH - SH RÍO BOGOTA</span></div>
<div class="c" style="left:688px;top:276px;width:83px;height:22px;background:#f0fde1;"><span class="t" style="right:1.00px;top:0px;letter-spacing:0.956px;margin-right:-0.956px;transform-origin:100% 50%;">901,468,372.2</span></div>
<div class="c" style="left:773px;top:276px;width:134px;height:22px;background:#f0fde1;"><span class="t" style="right:0.00px;top:0px;letter-spacing:1.123px;margin-right:-1.123px;transform-origin:100% 50%;">13,914,000,000</span></div>
<div class="c" style="left:909px;top:276px;width:137px;height:22px;background:#f0fde1;"><span class="t" style="right:4.00px;top:0px;letter-spacing:1.123px;margin-right:-1.123px;transform-origin:100% 50%;">19,116,805,690</span></div>
<div class="c" style="left:1048px;top:276px;width:113px;height:22px;background:#f0fde1;"><span class="t" style="left:1px;top:0px;letter-spacing:0px;"></span></div>
<div class="c" style="left:1163px;top:276px;width:132px;height:22px;background:#f0fde1;"><span class="t" style="left:2px;top:0px;letter-spacing:1.047px;"><u style="letter-spacing:1.047px">2021</u><u style="letter-spacing:0.497px">CCO</u><u style="letter-spacing:1.047px">1516</u></span></div>
<div class="c" style="left:1297px;top:276px;width:87px;height:22px;background:#f0fde1;"><span class="t" style="left:2px;top:0px;letter-spacing:1.047px;"><u style="letter-spacing:1.047px">22</u><u style="letter-spacing:0;margin:0 2.046px">/</u><u style="letter-spacing:1.047px">04</u><u style="letter-spacing:0;margin:0 2.046px">/</u><u style="letter-spacing:1.047px">2021</u></span></div>
<div class="c" style="left:1386px;top:276px;width:140px;height:22px;background:#f0fde1;"><span class="t" style="right:1.00px;top:0px;letter-spacing:1.123px;margin-right:-1.123px;transform-origin:100% 50%;">13,914,000,000</span></div>
<div class="c" style="left:1528px;top:276px;width:92px;height:22px;background:#f0fde1;"><span class="t" style="left:-1px;top:0px;letter-spacing:0.04px;">APROBADO</span></div>
<div class="c" style="left:1622px;top:276px;width:188px;height:22px;background:#f0fde1;"><span class="t" style="right:4.00px;top:0px;letter-spacing:1.129px;margin-right:-1.129px;transform-origin:100% 50%;">5,202,805,690</span></div>
<div class="c" style="left:1812px;top:276px;width:64px;height:22px;background:#f0fde1;"><span class="t" style="left:1px;top:0px;letter-spacing:1.502px;"><u style="letter-spacing:-0.62px">SSGC N</u><u style="letter-spacing:1.502px">o.</u></span></div>
<div style="left:29px;top:298px;width:48px;height:1px;background:#f0f0f0;"></div>
<span class="rn" style="left:29px;top:300px;width:48px;height:21px;">9</span>
<div class="c" style="left:78px;top:300px;width:68px;height:21px;background:#fff;"></div>
<svg style="left:79px;top:301px" width="18.6" height="18.6" viewBox="0 0 18.6 18.6"><rect x=".75" y=".75" width="17.1" height="17.1" fill="#fff" stroke="#2b2b2b" stroke-width="1.5"/><path d="M5.1 5.9 L3.2 8.3 L7.2 12.7 L8.8 12.3 C10.6 8.4 13 5.4 16.7 3 L15.8 2 C12.6 3.7 10 6 8 9 Z" fill="#000"/></svg>
<div class="c" style="left:148px;top:300px;width:62px;height:21px;background:#fff;"><span class="t" style="left:0;width:62px;text-align:center;top:0px;letter-spacing:1.047px;text-indent:1.047px;transform-origin:50% 50%;">2021</span></div>
<div class="c" style="left:213px;top:300px;width:66px;height:21px;background:#fff;"><span class="t" style="right:0.50px;top:0px;letter-spacing:1.227px;margin-right:-1.227px;transform-origin:100% 50%;">21802175</span></div>
<div class="c" style="left:281px;top:300px;width:198px;height:21px;background:#fff;"><span class="t" style="left:1px;top:0px;letter-spacing:0.975px;">Prestación del servicio de mensajería</span></div>
<div class="c" style="left:481px;top:300px;width:205px;height:21px;background:#fff;"><span class="t" style="left:0.5px;top:0px;letter-spacing:-0.274px;">SERVICIOS POSTALES NACIONALES</span></div>
<div class="c" style="left:688px;top:300px;width:83px;height:21px;background:#fff;"><span class="t" style="right:1.00px;top:0px;letter-spacing:0.956px;margin-right:-0.956px;transform-origin:100% 50%;">900,062,917.9</span></div>
<div class="c" style="left:773px;top:300px;width:134px;height:21px;background:#fff;"><span class="t" style="right:0.00px;top:0px;letter-spacing:1.112px;margin-right:-1.112px;transform-origin:100% 50%;">898,315,972</span></div>
<div class="c" style="left:909px;top:300px;width:137px;height:21px;background:#fff;"><span class="t" style="right:4.00px;top:0px;letter-spacing:1.129px;margin-right:-1.129px;transform-origin:100% 50%;">1,726,420,150</span></div>
<div class="c" style="left:1048px;top:300px;width:113px;height:21px;background:#fff;"><span class="t" style="left:1px;top:0px;letter-spacing:0px;"></span></div>
<div class="c" style="left:1163px;top:300px;width:132px;height:21px;background:#fff;"><span class="t" style="left:2px;top:0px;letter-spacing:1.047px;"><u style="letter-spacing:1.047px">2021</u><u style="letter-spacing:0.811px">COI</u><u style="letter-spacing:1.047px">1549</u></span></div>
<div class="c" style="left:1297px;top:300px;width:87px;height:21px;background:#fff;"><span class="t" style="left:2px;top:0px;letter-spacing:1.047px;"><u style="letter-spacing:1.047px">03</u><u style="letter-spacing:0;margin:0 2.046px">/</u><u style="letter-spacing:1.047px">05</u><u style="letter-spacing:0;margin:0 2.046px">/</u><u style="letter-spacing:1.047px">2021</u></span></div>
<div class="c" style="left:1386px;top:300px;width:140px;height:21px;background:#fff;"><span class="t" style="right:1.00px;top:0px;letter-spacing:1.112px;margin-right:-1.112px;transform-origin:100% 50%;">617,991,485</span></div>
<div class="c" style="left:1528px;top:300px;width:92px;height:21px;background:#fff;"><span class="t" style="left:-1px;top:0px;letter-spacing:0.04px;">APROBADO</span></div>
<div class="c" style="left:1622px;top:300px;width:188px;height:21px;background:#fff;"><span class="t" style="right:4.00px;top:0px;letter-spacing:1.112px;margin-right:-1.112px;transform-origin:100% 50%;">828,104,178</span></div>
<div class="c" style="left:1812px;top:300px;width:64px;height:21px;background:#fff;"><span class="t" style="left:1px;top:0px;letter-spacing:1.502px;"><u style="letter-spacing:-0.62px">SSGC N</u><u style="letter-spacing:1.502px">o.</u></span></div>
<div style="left:29px;top:321px;width:48px;height:1px;background:#f0f0f0;"></div>
<span class="rn" style="left:29px;top:323px;width:48px;height:22px;">10</span>
<div class="c" style="left:78px;top:323px;width:68px;height:22px;background:#f0fde1;"></div>
<svg style="left:79px;top:324px" width="18.6" height="18.6" viewBox="0 0 18.6 18.6"><rect x=".75" y=".75" width="17.1" height="17.1" fill="#f0fde1" stroke="#2b2b2b" stroke-width="1.5"/><path d="M5.1 5.9 L3.2 8.3 L7.2 12.7 L8.8 12.3 C10.6 8.4 13 5.4 16.7 3 L15.8 2 C12.6 3.7 10 6 8 9 Z" fill="#000"/></svg>
<div class="c" style="left:148px;top:323px;width:62px;height:22px;background:#f0fde1;"><span class="t" style="left:0;width:62px;text-align:center;top:0px;letter-spacing:1.047px;text-indent:1.047px;transform-origin:50% 50%;">2021</span></div>
<div class="c" style="left:213px;top:323px;width:66px;height:22px;background:#f0fde1;"><span class="t" style="right:0.50px;top:0px;letter-spacing:1.227px;margin-right:-1.227px;transform-origin:100% 50%;">21802421</span></div>
<div class="c" style="left:281px;top:323px;width:198px;height:22px;background:#f0fde1;"><span class="t" style="left:1px;top:0px;letter-spacing:-0.5px;">AUNAR ESFUERZOS TÉCNICOS, ADMIN</span></div>
<div class="c" style="left:481px;top:323px;width:205px;height:22px;background:#f0fde1;"><span class="t" style="left:0.5px;top:0px;letter-spacing:-0.061px;">DEPARTAMENTO DE CUNDINAMARCA</span></div>
<div class="c" style="left:688px;top:323px;width:83px;height:22px;background:#f0fde1;"><span class="t" style="right:1.00px;top:0px;letter-spacing:0.956px;margin-right:-0.956px;transform-origin:100% 50%;">899,999,114.0</span></div>
<div class="c" style="left:773px;top:323px;width:134px;height:22px;background:#f0fde1;"><span class="t" style="right:0.00px;top:0px;letter-spacing:1.123px;margin-right:-1.123px;transform-origin:100% 50%;">15,974,522,634</span></div>
<div class="c" style="left:909px;top:323px;width:137px;height:22px;background:#f0fde1;"><span class="t" style="right:4.00px;top:0px;letter-spacing:1.123px;margin-right:-1.123px;transform-origin:100% 50%;">19,968,153,293</span></div>
<div class="c" style="left:1048px;top:323px;width:113px;height:22px;background:#f0fde1;"><span class="t" style="left:1px;top:0px;letter-spacing:0px;"></span></div>
<div class="c" style="left:1163px;top:323px;width:132px;height:22px;background:#f0fde1;"><span class="t" style="left:2px;top:0px;letter-spacing:1.047px;"><u style="letter-spacing:1.047px">2021</u><u style="letter-spacing:0.98px">COV</u><u style="letter-spacing:1.047px">1653</u></span></div>
<div class="c" style="left:1297px;top:323px;width:87px;height:22px;background:#f0fde1;"><span class="t" style="left:2px;top:0px;letter-spacing:1.047px;"><u style="letter-spacing:1.047px">10</u><u style="letter-spacing:0;margin:0 2.046px">/</u><u style="letter-spacing:1.047px">06</u><u style="letter-spacing:0;margin:0 2.046px">/</u><u style="letter-spacing:1.047px">2021</u></span></div>
<div class="c" style="left:1386px;top:323px;width:140px;height:22px;background:#f0fde1;"><span class="t" style="right:1.00px;top:0px;letter-spacing:1.123px;margin-right:-1.123px;transform-origin:100% 50%;">15,974,522,634</span></div>
<div class="c" style="left:1528px;top:323px;width:92px;height:22px;background:#f0fde1;"><span class="t" style="left:-1px;top:0px;letter-spacing:0.04px;">APROBADO</span></div>
<div class="c" style="left:1622px;top:323px;width:188px;height:22px;background:#f0fde1;"><span class="t" style="right:4.00px;top:0px;letter-spacing:1.129px;margin-right:-1.129px;transform-origin:100% 50%;">3,993,630,659</span></div>
<div class="c" style="left:1812px;top:323px;width:64px;height:22px;background:#f0fde1;"><span class="t" style="left:1px;top:0px;letter-spacing:1.502px;"><u style="letter-spacing:-0.62px">SSGC N</u><u style="letter-spacing:1.502px">o.</u></span></div>
<div style="left:29px;top:345px;width:48px;height:1px;background:#f0f0f0;"></div>
<span class="rn" style="left:29px;top:347px;width:48px;height:22px;">11</span>
<div class="c" style="left:78px;top:347px;width:68px;height:22px;background:#fff;"></div>
<svg style="left:79px;top:348px" width="18.6" height="18.6" viewBox="0 0 18.6 18.6"><rect x=".75" y=".75" width="17.1" height="17.1" fill="#fff" stroke="#2b2b2b" stroke-width="1.5"/><path d="M5.1 5.9 L3.2 8.3 L7.2 12.7 L8.8 12.3 C10.6 8.4 13 5.4 16.7 3 L15.8 2 C12.6 3.7 10 6 8 9 Z" fill="#000"/></svg>
<div class="c" style="left:148px;top:347px;width:62px;height:22px;background:#fff;"><span class="t" style="left:0;width:62px;text-align:center;top:0px;letter-spacing:1.047px;text-indent:1.047px;transform-origin:50% 50%;">2021</span></div>
<div class="c" style="left:213px;top:347px;width:66px;height:22px;background:#fff;"><span class="t" style="right:0.50px;top:0px;letter-spacing:1.227px;margin-right:-1.227px;transform-origin:100% 50%;">21802911</span></div>
<div class="c" style="left:281px;top:347px;width:198px;height:22px;background:#fff;"><span class="t" style="left:1px;top:0px;letter-spacing:0.964px;">Prestar servicios de apoyo a la</span></div>
<div class="c" style="left:481px;top:347px;width:205px;height:22px;background:#fff;"><span class="t" style="left:0.5px;top:0px;letter-spacing:0.148px;">LUGO MURILLO MARYAM CONSTANZA</span></div>
<div class="c" style="left:688px;top:347px;width:83px;height:22px;background:#fff;"><span class="t" style="right:1.00px;top:0px;letter-spacing:0.967px;margin-right:-0.967px;transform-origin:100% 50%;">53,330,118.0</span></div>
<div class="c" style="left:773px;top:347px;width:134px;height:22px;background:#fff;"><span class="t" style="right:0.00px;top:0px;letter-spacing:1.126px;margin-right:-1.126px;transform-origin:100% 50%;">5,501,382</span></div>
<div class="c" style="left:909px;top:347px;width:137px;height:22px;background:#fff;"><span class="t" style="right:4.00px;top:0px;letter-spacing:1.118px;margin-right:-1.118px;transform-origin:100% 50%;">18,058,885</span></div>
<div class="c" style="left:1048px;top:347px;width:113px;height:22px;background:#fff;"><span class="t" style="left:1px;top:0px;letter-spacing:0px;"></span></div>
<div class="c" style="left:1163px;top:347px;width:132px;height:22px;background:#fff;"><span class="t" style="left:2px;top:0px;letter-spacing:1.047px;"><u style="letter-spacing:1.047px">2021</u><u style="letter-spacing:-0.3px">CSE</u><u style="letter-spacing:1.047px">1977</u></span></div>
<div class="c" style="left:1297px;top:347px;width:87px;height:22px;background:#fff;"><span class="t" style="left:2px;top:0px;letter-spacing:1.047px;"><u style="letter-spacing:1.047px">30</u><u style="letter-spacing:0;margin:0 2.046px">/</u><u style="letter-spacing:1.047px">07</u><u style="letter-spacing:0;margin:0 2.046px">/</u><u style="letter-spacing:1.047px">2021</u></span></div>
<div class="c" style="left:1386px;top:347px;width:140px;height:22px;background:#fff;"><span class="t" style="right:1.00px;top:0px;letter-spacing:1.126px;margin-right:-1.126px;transform-origin:100% 50%;">5,501,382</span></div>
<div class="c" style="left:1528px;top:347px;width:92px;height:22px;background:#fff;"><span class="t" style="left:-1px;top:0px;letter-spacing:0.04px;">APROBADO</span></div>
<div class="c" style="left:1622px;top:347px;width:188px;height:22px;background:#fff;"><span class="t" style="right:4.00px;top:0px;letter-spacing:1.118px;margin-right:-1.118px;transform-origin:100% 50%;">12,557,503</span></div>
<div class="c" style="left:1812px;top:347px;width:64px;height:22px;background:#fff;"><span class="t" style="left:1px;top:0px;letter-spacing:1.502px;"><u style="letter-spacing:-0.62px">SSGC N</u><u style="letter-spacing:1.502px">o.</u></span></div>
<div style="left:29px;top:369px;width:48px;height:1px;background:#f0f0f0;"></div>
<span class="rn" style="left:29px;top:371px;width:48px;height:22px;">12</span>
<div class="c" style="left:78px;top:371px;width:68px;height:22px;background:#f0fde1;"></div>
<svg style="left:79px;top:372px" width="18.6" height="18.6" viewBox="0 0 18.6 18.6"><rect x=".75" y=".75" width="17.1" height="17.1" fill="#f0fde1" stroke="#2b2b2b" stroke-width="1.5"/><path d="M5.1 5.9 L3.2 8.3 L7.2 12.7 L8.8 12.3 C10.6 8.4 13 5.4 16.7 3 L15.8 2 C12.6 3.7 10 6 8 9 Z" fill="#000"/></svg>
<div class="c" style="left:148px;top:371px;width:62px;height:22px;background:#f0fde1;"><span class="t" style="left:0;width:62px;text-align:center;top:0px;letter-spacing:1.047px;text-indent:1.047px;transform-origin:50% 50%;">2021</span></div>
<div class="c" style="left:213px;top:371px;width:66px;height:22px;background:#f0fde1;"><span class="t" style="right:0.50px;top:0px;letter-spacing:1.227px;margin-right:-1.227px;transform-origin:100% 50%;">21803112</span></div>
<div class="c" style="left:281px;top:371px;width:198px;height:22px;background:#f0fde1;"><span class="t" style="left:1px;top:0px;letter-spacing:0.964px;">Prestar servicios de apoyo a la</span></div>
<div class="c" style="left:481px;top:371px;width:205px;height:22px;background:#f0fde1;"><span class="t" style="left:0.5px;top:0px;letter-spacing:-0.635px;">ESPEJO VALLEJO DANIELA ALEJANDRA</span></div>
<div class="c" style="left:688px;top:371px;width:83px;height:22px;background:#f0fde1;"><span class="t" style="right:1.00px;top:0px;letter-spacing:0.977px;margin-right:-0.977px;transform-origin:100% 50%;">1,013,673,118.0</span></div>
<div class="c" style="left:773px;top:371px;width:134px;height:22px;background:#f0fde1;"><span class="t" style="right:0.00px;top:0px;letter-spacing:1.126px;margin-right:-1.126px;transform-origin:100% 50%;">6,697,335</span></div>
<div class="c" style="left:909px;top:371px;width:137px;height:22px;background:#f0fde1;"><span class="t" style="right:4.00px;top:0px;letter-spacing:1.118px;margin-right:-1.118px;transform-origin:100% 50%;">19,254,838</span></div>
<div class="c" style="left:1048px;top:371px;width:113px;height:22px;background:#f0fde1;"><span class="t" style="left:1px;top:0px;letter-spacing:0px;"></span></div>
<div class="c" style="left:1163px;top:371px;width:132px;height:22px;background:#f0fde1;"><span class="t" style="left:2px;top:0px;letter-spacing:1.047px;"><u style="letter-spacing:1.047px">2021</u><u style="letter-spacing:-0.3px">CSE</u><u style="letter-spacing:1.047px">2057</u></span></div>
<div class="c" style="left:1297px;top:371px;width:87px;height:22px;background:#f0fde1;"><span class="t" style="left:2px;top:0px;letter-spacing:1.047px;"><u style="letter-spacing:1.047px">19</u><u style="letter-spacing:0;margin:0 2.046px">/</u><u style="letter-spacing:1.047px">08</u><u style="letter-spacing:0;margin:0 2.046px">/</u><u style="letter-spacing:1.047px">2021</u></span></div>
<div class="c" style="left:1386px;top:371px;width:140px;height:22px;background:#f0fde1;"><span class="t" style="right:1.00px;top:0px;letter-spacing:1.126px;margin-right:-1.126px;transform-origin:100% 50%;">6,697,335</span></div>
<div class="c" style="left:1528px;top:371px;width:92px;height:22px;background:#f0fde1;"><span class="t" style="left:-1px;top:0px;letter-spacing:0.04px;">APROBADO</span></div>
<div class="c" style="left:1622px;top:371px;width:188px;height:22px;background:#f0fde1;"><span class="t" style="right:4.00px;top:0px;letter-spacing:1.118px;margin-right:-1.118px;transform-origin:100% 50%;">12,557,503</span></div>
<div class="c" style="left:1812px;top:371px;width:64px;height:22px;background:#f0fde1;"><span class="t" style="left:1px;top:0px;letter-spacing:1.502px;"><u style="letter-spacing:-0.62px">SSGC N</u><u style="letter-spacing:1.502px">o.</u></span></div>
<div style="left:29px;top:393px;width:48px;height:1px;background:#f0f0f0;"></div>
<span class="rn" style="left:29px;top:395px;width:48px;height:22px;">13</span>
<div class="c" style="left:78px;top:395px;width:68px;height:22px;background:#fff;"></div>
<svg style="left:79px;top:396px" width="18.6" height="18.6" viewBox="0 0 18.6 18.6"><rect x=".75" y=".75" width="17.1" height="17.1" fill="#fff" stroke="#2b2b2b" stroke-width="1.5"/><path d="M5.1 5.9 L3.2 8.3 L7.2 12.7 L8.8 12.3 C10.6 8.4 13 5.4 16.7 3 L15.8 2 C12.6 3.7 10 6 8 9 Z" fill="#000"/></svg>
<div class="c" style="left:148px;top:395px;width:62px;height:22px;background:#fff;"><span class="t" style="left:0;width:62px;text-align:center;top:0px;letter-spacing:1.047px;text-indent:1.047px;transform-origin:50% 50%;">2021</span></div>
<div class="c" style="left:213px;top:395px;width:66px;height:22px;background:#fff;"><span class="t" style="right:0.50px;top:0px;letter-spacing:1.227px;margin-right:-1.227px;transform-origin:100% 50%;">21803128</span></div>
<div class="c" style="left:281px;top:395px;width:198px;height:22px;background:#fff;"><span class="t" style="left:1px;top:0px;letter-spacing:0.077px;">OPERACIÓN Y MANTENIMIENTO</span></div>
<div class="c" style="left:481px;top:395px;width:205px;height:22px;background:#fff;"><span class="t" style="left:0.5px;top:0px;letter-spacing:0.17px;">UNION TEMPORAL OPERACIONES</span></div>
<div class="c" style="left:688px;top:395px;width:83px;height:22px;background:#fff;"><span class="t" style="right:1.00px;top:0px;letter-spacing:0.956px;margin-right:-0.956px;transform-origin:100% 50%;">901,503,118.0</span></div>
<div class="c" style="left:773px;top:395px;width:134px;height:22px;background:#fff;"><span class="t" style="right:0.00px;top:0px;letter-spacing:1.123px;margin-right:-1.123px;transform-origin:100% 50%;">13,913,009,380</span></div>
<div class="c" style="left:909px;top:395px;width:137px;height:22px;background:#fff;"><span class="t" style="right:4.00px;top:0px;letter-spacing:1.123px;margin-right:-1.123px;transform-origin:100% 50%;">63,153,324,585</span></div>
<div class="c" style="left:1048px;top:395px;width:113px;height:22px;background:#fff;"><span class="t" style="left:1px;top:0px;letter-spacing:0px;"></span></div>
<div class="c" style="left:1163px;top:395px;width:132px;height:22px;background:#fff;"><span class="t" style="left:2px;top:0px;letter-spacing:1.047px;"><u style="letter-spacing:1.047px">2021</u><u style="letter-spacing:0.829px">COB</u><u style="letter-spacing:1.047px">2221</u></span></div>
<div class="c" style="left:1297px;top:395px;width:87px;height:22px;background:#fff;"><span class="t" style="left:2px;top:0px;letter-spacing:1.047px;"><u style="letter-spacing:1.047px">20</u><u style="letter-spacing:0;margin:0 2.046px">/</u><u style="letter-spacing:1.047px">08</u><u style="letter-spacing:0;margin:0 2.046px">/</u><u style="letter-spacing:1.047px">2021</u></span></div>
<div class="c" style="left:1386px;top:395px;width:140px;height:22px;background:#fff;"><span class="t" style="right:1.00px;top:0px;letter-spacing:1.123px;margin-right:-1.123px;transform-origin:100% 50%;">13,913,009,380</span></div>
<div class="c" style="left:1528px;top:395px;width:92px;height:22px;background:#fff;"><span class="t" style="left:-1px;top:0px;letter-spacing:0.04px;">APROBADO</span></div>
<div class="c" style="left:1622px;top:395px;width:188px;height:22px;background:#fff;"><span class="t" style="right:4.00px;top:0px;letter-spacing:1.123px;margin-right:-1.123px;transform-origin:100% 50%;">49,240,315,205</span></div>
<div class="c" style="left:1812px;top:395px;width:64px;height:22px;background:#fff;"><span class="t" style="left:1px;top:0px;letter-spacing:1.502px;"><u style="letter-spacing:-0.62px">SSGC N</u><u style="letter-spacing:1.502px">o.</u></span></div>
<div style="left:29px;top:417px;width:48px;height:1px;background:#f0f0f0;"></div>
<span class="rn" style="left:29px;top:419px;width:48px;height:21px;">14</span>
<div class="c" style="left:78px;top:419px;width:68px;height:21px;background:#f0fde1;"></div>
<svg style="left:79px;top:420px" width="18.6" height="18.6" viewBox="0 0 18.6 18.6"><rect x=".75" y=".75" width="17.1" height="17.1" fill="#f0fde1" stroke="#2b2b2b" stroke-width="1.5"/><path d="M5.1 5.9 L3.2 8.3 L7.2 12.7 L8.8 12.3 C10.6 8.4 13 5.4 16.7 3 L15.8 2 C12.6 3.7 10 6 8 9 Z" fill="#000"/></svg>
<div class="c" style="left:148px;top:419px;width:62px;height:21px;background:#f0fde1;"><span class="t" style="left:0;width:62px;text-align:center;top:0px;letter-spacing:1.047px;text-indent:1.047px;transform-origin:50% 50%;">2021</span></div>
<div class="c" style="left:213px;top:419px;width:66px;height:21px;background:#f0fde1;"><span class="t" style="right:0.50px;top:0px;letter-spacing:1.227px;margin-right:-1.227px;transform-origin:100% 50%;">21803190</span></div>
<div class="c" style="left:281px;top:419px;width:198px;height:21px;background:#f0fde1;"><span class="t" style="left:1px;top:0px;letter-spacing:-0.437px;">CONTRATAR LA PRESTACIÓN DEL</span></div>
<div class="c" style="left:481px;top:419px;width:205px;height:21px;background:#f0fde1;"><span class="t" style="left:0.5px;top:0px;letter-spacing:-0.063px;">UNION TEMPORAL TRANSPORTES</span></div>
<div class="c" style="left:688px;top:419px;width:83px;height:21px;background:#f0fde1;"><span class="t" style="right:1.00px;top:0px;letter-spacing:0.956px;margin-right:-0.956px;transform-origin:100% 50%;">901,513,118.0</span></div>
<div class="c" style="left:773px;top:419px;width:134px;height:21px;background:#f0fde1;"><span class="t" style="right:0.00px;top:0px;letter-spacing:1.129px;margin-right:-1.129px;transform-origin:100% 50%;">8,766,569,243</span></div>
<div class="c" style="left:909px;top:419px;width:137px;height:21px;background:#f0fde1;"><span class="t" style="right:4.00px;top:0px;letter-spacing:1.123px;margin-right:-1.123px;transform-origin:100% 50%;">16,024,153,072</span></div>
<div class="c" style="left:1048px;top:419px;width:113px;height:21px;background:#f0fde1;"><span class="t" style="left:1px;top:0px;letter-spacing:0px;"></span></div>
<div class="c" style="left:1163px;top:419px;width:132px;height:21px;background:#f0fde1;"><span class="t" style="left:2px;top:0px;letter-spacing:1.047px;"><u style="letter-spacing:1.047px">2021</u><u style="letter-spacing:-0.3px">CSE</u><u style="letter-spacing:1.047px">2263</u></span></div>
<div class="c" style="left:1297px;top:419px;width:87px;height:21px;background:#f0fde1;"><span class="t" style="left:2px;top:0px;letter-spacing:1.047px;"><u style="letter-spacing:1.047px">25</u><u style="letter-spacing:0;margin:0 2.046px">/</u><u style="letter-spacing:1.047px">08</u><u style="letter-spacing:0;margin:0 2.046px">/</u><u style="letter-spacing:1.047px">2021</u></span></div>
<div class="c" style="left:1386px;top:419px;width:140px;height:21px;background:#f0fde1;"><span class="t" style="right:1.00px;top:0px;letter-spacing:1.129px;margin-right:-1.129px;transform-origin:100% 50%;">8,766,569,243</span></div>
<div class="c" style="left:1528px;top:419px;width:92px;height:21px;background:#f0fde1;"><span class="t" style="left:-1px;top:0px;letter-spacing:0.04px;">APROBADO</span></div>
<div class="c" style="left:1622px;top:419px;width:188px;height:21px;background:#f0fde1;"><span class="t" style="right:4.00px;top:0px;letter-spacing:1.129px;margin-right:-1.129px;transform-origin:100% 50%;">7,257,583,829</span></div>
<div class="c" style="left:1812px;top:419px;width:64px;height:21px;background:#f0fde1;"><span class="t" style="left:1px;top:0px;letter-spacing:1.502px;"><u style="letter-spacing:-0.62px">SSGC N</u><u style="letter-spacing:1.502px">o.</u></span></div>
<div style="left:29px;top:440px;width:48px;height:1px;background:#f0f0f0;"></div>
<span class="rn" style="left:29px;top:442px;width:48px;height:22px;">15</span>
<div class="c" style="left:78px;top:442px;width:68px;height:22px;background:#fff;"></div>
<svg style="left:79px;top:443px" width="18.6" height="18.6" viewBox="0 0 18.6 18.6"><rect x=".75" y=".75" width="17.1" height="17.1" fill="#fff" stroke="#2b2b2b" stroke-width="1.5"/><path d="M5.1 5.9 L3.2 8.3 L7.2 12.7 L8.8 12.3 C10.6 8.4 13 5.4 16.7 3 L15.8 2 C12.6 3.7 10 6 8 9 Z" fill="#000"/></svg>
<div class="c" style="left:148px;top:442px;width:62px;height:22px;background:#fff;"><span class="t" style="left:0;width:62px;text-align:center;top:0px;letter-spacing:1.047px;text-indent:1.047px;transform-origin:50% 50%;">2021</span></div>
<div class="c" style="left:213px;top:442px;width:66px;height:22px;background:#fff;"><span class="t" style="right:0.50px;top:0px;letter-spacing:1.227px;margin-right:-1.227px;transform-origin:100% 50%;">21803219</span></div>
<div class="c" style="left:281px;top:442px;width:198px;height:22px;background:#fff;"><span class="t" style="left:1px;top:0px;letter-spacing:0.964px;">Prestar servicios de apoyo a la</span></div>
<div class="c" style="left:481px;top:442px;width:205px;height:22px;background:#fff;"><span class="t" style="left:0.5px;top:0px;letter-spacing:-0.391px;">GARCIA OLMOS DAYANNA GERALDINE</span></div>
<div class="c" style="left:688px;top:442px;width:83px;height:22px;background:#fff;"><span class="t" style="right:1.00px;top:0px;letter-spacing:0.977px;margin-right:-0.977px;transform-origin:100% 50%;">1,012,523,118.0</span></div>
<div class="c" style="left:773px;top:442px;width:134px;height:22px;background:#fff;"><span class="t" style="right:0.00px;top:0px;letter-spacing:1.126px;margin-right:-1.126px;transform-origin:100% 50%;">6,278,752</span></div>
<div class="c" style="left:909px;top:442px;width:137px;height:22px;background:#fff;"><span class="t" style="right:4.00px;top:0px;letter-spacing:1.118px;margin-right:-1.118px;transform-origin:100% 50%;">19,793,017</span></div>
<div class="c" style="left:1048px;top:442px;width:113px;height:22px;background:#fff;"><span class="t" style="left:1px;top:0px;letter-spacing:0px;"></span></div>
<div class="c" style="left:1163px;top:442px;width:132px;height:22px;background:#fff;"><span class="t" style="left:2px;top:0px;letter-spacing:1.047px;"><u style="letter-spacing:1.047px">2021</u><u style="letter-spacing:-0.3px">CSE</u><u style="letter-spacing:1.047px">1930</u></span></div>
<div class="c" style="left:1297px;top:442px;width:87px;height:22px;background:#fff;"><span class="t" style="left:2px;top:0px;letter-spacing:1.047px;"><u style="letter-spacing:1.047px">27</u><u style="letter-spacing:0;margin:0 2.046px">/</u><u style="letter-spacing:1.047px">08</u><u style="letter-spacing:0;margin:0 2.046px">/</u><u style="letter-spacing:1.047px">2021</u></span></div>
<div class="c" style="left:1386px;top:442px;width:140px;height:22px;background:#fff;"><span class="t" style="right:1.00px;top:0px;letter-spacing:1.126px;margin-right:-1.126px;transform-origin:100% 50%;">6,278,752</span></div>
<div class="c" style="left:1528px;top:442px;width:92px;height:22px;background:#fff;"><span class="t" style="left:-1px;top:0px;letter-spacing:0.04px;">APROBADO</span></div>
<div class="c" style="left:1622px;top:442px;width:188px;height:22px;background:#fff;"><span class="t" style="right:4.00px;top:0px;letter-spacing:1.118px;margin-right:-1.118px;transform-origin:100% 50%;">13,514,265</span></div>
<div class="c" style="left:1812px;top:442px;width:64px;height:22px;background:#fff;"><span class="t" style="left:1px;top:0px;letter-spacing:1.502px;"><u style="letter-spacing:-0.62px">SSGC N</u><u style="letter-spacing:1.502px">o.</u></span></div>
<div style="left:29px;top:464px;width:48px;height:1px;background:#f0f0f0;"></div>
<span class="rn" style="left:29px;top:466px;width:48px;height:22px;">16</span>
<div class="c" style="left:78px;top:466px;width:68px;height:22px;background:#f0fde1;"></div>
<svg style="left:79px;top:467px" width="18.6" height="18.6" viewBox="0 0 18.6 18.6"><rect x=".75" y=".75" width="17.1" height="17.1" fill="#f0fde1" stroke="#2b2b2b" stroke-width="1.5"/><path d="M5.1 5.9 L3.2 8.3 L7.2 12.7 L8.8 12.3 C10.6 8.4 13 5.4 16.7 3 L15.8 2 C12.6 3.7 10 6 8 9 Z" fill="#000"/></svg>
<div class="c" style="left:148px;top:466px;width:62px;height:22px;background:#f0fde1;"><span class="t" style="left:0;width:62px;text-align:center;top:0px;letter-spacing:1.047px;text-indent:1.047px;transform-origin:50% 50%;">2021</span></div>
<div class="c" style="left:213px;top:466px;width:66px;height:22px;background:#f0fde1;"><span class="t" style="right:0.50px;top:0px;letter-spacing:1.227px;margin-right:-1.227px;transform-origin:100% 50%;">21803220</span></div>
<div class="c" style="left:281px;top:466px;width:198px;height:22px;background:#f0fde1;"><span class="t" style="left:1px;top:0px;letter-spacing:1.047px;">Prestación de servicios profesionales</span></div>
<div class="c" style="left:481px;top:466px;width:205px;height:22px;background:#f0fde1;"><span class="t" style="left:0.5px;top:0px;letter-spacing:-0.405px;">ALMANZA TORRES KELLY JHOANA</span></div>
<div class="c" style="left:688px;top:466px;width:83px;height:22px;background:#f0fde1;"><span class="t" style="right:1.00px;top:0px;letter-spacing:0.977px;margin-right:-0.977px;transform-origin:100% 50%;">1,031,638,118.0</span></div>
<div class="c" style="left:773px;top:466px;width:134px;height:22px;background:#f0fde1;"><span class="t" style="right:0.00px;top:0px;letter-spacing:1.118px;margin-right:-1.118px;transform-origin:100% 50%;">22,400,000</span></div>
<div class="c" style="left:909px;top:466px;width:137px;height:22px;background:#f0fde1;"><span class="t" style="right:4.00px;top:0px;letter-spacing:1.118px;margin-right:-1.118px;transform-origin:100% 50%;">46,400,000</span></div>
<div class="c" style="left:1048px;top:466px;width:113px;height:22px;background:#f0fde1;"><span class="t" style="left:1px;top:0px;letter-spacing:0px;"></span></div>
<div class="c" style="left:1163px;top:466px;width:132px;height:22px;background:#f0fde1;"><span class="t" style="left:2px;top:0px;letter-spacing:1.047px;"><u style="letter-spacing:1.047px">2021</u><u style="letter-spacing:-0.3px">CSE</u><u style="letter-spacing:1.047px">2165</u></span></div>
<div class="c" style="left:1297px;top:466px;width:87px;height:22px;background:#f0fde1;"><span class="t" style="left:2px;top:0px;letter-spacing:1.047px;"><u style="letter-spacing:1.047px">27</u><u style="letter-spacing:0;margin:0 2.046px">/</u><u style="letter-spacing:1.047px">08</u><u style="letter-spacing:0;margin:0 2.046px">/</u><u style="letter-spacing:1.047px">2021</u></span></div>
<div class="c" style="left:1386px;top:466px;width:140px;height:22px;background:#f0fde1;"><span class="t" style="right:1.00px;top:0px;letter-spacing:1.118px;margin-right:-1.118px;transform-origin:100% 50%;">22,400,000</span></div>
<div class="c" style="left:1528px;top:466px;width:92px;height:22px;background:#f0fde1;"><span class="t" style="left:-1px;top:0px;letter-spacing:0.04px;">APROBADO</span></div>
<div class="c" style="left:1622px;top:466px;width:188px;height:22px;background:#f0fde1;"><span class="t" style="right:4.00px;top:0px;letter-spacing:1.118px;margin-right:-1.118px;transform-origin:100% 50%;">24,000,000</span></div>
<div class="c" style="left:1812px;top:466px;width:64px;height:22px;background:#f0fde1;"><span class="t" style="left:1px;top:0px;letter-spacing:1.502px;"><u style="letter-spacing:-0.62px">SSGC N</u><u style="letter-spacing:1.502px">o.</u></span></div>
<div style="left:29px;top:488px;width:48px;height:1px;background:#f0f0f0;"></div>
<span class="rn" style="left:29px;top:490px;width:48px;height:21px;">17</span>
<div class="c" style="left:78px;top:490px;width:68px;height:21px;background:#fff;"></div>
<svg style="left:79px;top:491px" width="18.6" height="18.6" viewBox="0 0 18.6 18.6"><rect x=".75" y=".75" width="17.1" height="17.1" fill="#fff" stroke="#2b2b2b" stroke-width="1.5"/><path d="M5.1 5.9 L3.2 8.3 L7.2 12.7 L8.8 12.3 C10.6 8.4 13 5.4 16.7 3 L15.8 2 C12.6 3.7 10 6 8 9 Z" fill="#000"/></svg>
<div class="c" style="left:148px;top:490px;width:62px;height:21px;background:#fff;"><span class="t" style="left:0;width:62px;text-align:center;top:0px;letter-spacing:1.047px;text-indent:1.047px;transform-origin:50% 50%;">2021</span></div>
<div class="c" style="left:213px;top:490px;width:66px;height:21px;background:#fff;"><span class="t" style="right:0.50px;top:0px;letter-spacing:1.227px;margin-right:-1.227px;transform-origin:100% 50%;">21803221</span></div>
<div class="c" style="left:281px;top:490px;width:198px;height:21px;background:#fff;"><span class="t" style="left:1px;top:0px;letter-spacing:1.047px;">Prestación de servicios profesionales</span></div>
<div class="c" style="left:481px;top:490px;width:205px;height:21px;background:#fff;"><span class="t" style="left:0.5px;top:0px;letter-spacing:-0.126px;">VEGA LOPERA JOSE MAURICIO</span></div>
<div class="c" style="left:688px;top:490px;width:83px;height:21px;background:#fff;"><span class="t" style="right:1.00px;top:0px;letter-spacing:0.967px;margin-right:-0.967px;transform-origin:100% 50%;">74,853,118.0</span></div>
<div class="c" style="left:773px;top:490px;width:134px;height:21px;background:#fff;"><span class="t" style="right:0.00px;top:0px;letter-spacing:1.118px;margin-right:-1.118px;transform-origin:100% 50%;">43,200,000</span></div>
<div class="c" style="left:909px;top:490px;width:137px;height:21px;background:#fff;"><span class="t" style="right:4.00px;top:0px;letter-spacing:1.118px;margin-right:-1.118px;transform-origin:100% 50%;">91,200,000</span></div>
<div class="c" style="left:1048px;top:490px;width:113px;height:21px;background:#fff;"><span class="t" style="left:1px;top:0px;letter-spacing:0px;"></span></div>
<div class="c" style="left:1163px;top:490px;width:132px;height:21px;background:#fff;"><span class="t" style="left:2px;top:0px;letter-spacing:1.047px;"><u style="letter-spacing:1.047px">2021</u><u style="letter-spacing:-0.3px">CSE</u><u style="letter-spacing:1.047px">2167</u></span></div>
<div class="c" style="left:1297px;top:490px;width:87px;height:21px;background:#fff;"><span class="t" style="left:2px;top:0px;letter-spacing:1.047px;"><u style="letter-spacing:1.047px">27</u><u style="letter-spacing:0;margin:0 2.046px">/</u><u style="letter-spacing:1.047px">08</u><u style="letter-spacing:0;margin:0 2.046px">/</u><u style="letter-spacing:1.047px">2021</u></span></div>
<div class="c" style="left:1386px;top:490px;width:140px;height:21px;background:#fff;"><span class="t" style="right:1.00px;top:0px;letter-spacing:1.118px;margin-right:-1.118px;transform-origin:100% 50%;">43,200,000</span></div>
<div class="c" style="left:1528px;top:490px;width:92px;height:21px;background:#fff;"><span class="t" style="left:-1px;top:0px;letter-spacing:0.04px;">APROBADO</span></div>
<div class="c" style="left:1622px;top:490px;width:188px;height:21px;background:#fff;"><span class="t" style="right:4.00px;top:0px;letter-spacing:1.118px;margin-right:-1.118px;transform-origin:100% 50%;">48,000,000</span></div>
<div class="c" style="left:1812px;top:490px;width:64px;height:21px;background:#fff;"><span class="t" style="left:1px;top:0px;letter-spacing:1.502px;"><u style="letter-spacing:-0.62px">SSGC N</u><u style="letter-spacing:1.502px">o.</u></span></div>
<div style="left:29px;top:511px;width:48px;height:1px;background:#f0f0f0;"></div>
<span class="rn" style="left:29px;top:513px;width:48px;height:22px;">18</span>
<div class="c" style="left:78px;top:513px;width:68px;height:22px;background:#f0fde1;"></div>
<svg style="left:79px;top:514px" width="18.6" height="18.6" viewBox="0 0 18.6 18.6"><rect x=".75" y=".75" width="17.1" height="17.1" fill="#f0fde1" stroke="#2b2b2b" stroke-width="1.5"/><path d="M5.1 5.9 L3.2 8.3 L7.2 12.7 L8.8 12.3 C10.6 8.4 13 5.4 16.7 3 L15.8 2 C12.6 3.7 10 6 8 9 Z" fill="#000"/></svg>
<div class="c" style="left:148px;top:513px;width:62px;height:22px;background:#f0fde1;"><span class="t" style="left:0;width:62px;text-align:center;top:0px;letter-spacing:1.047px;text-indent:1.047px;transform-origin:50% 50%;">2021</span></div>
<div class="c" style="left:213px;top:513px;width:66px;height:22px;background:#f0fde1;"><span class="t" style="right:0.50px;top:0px;letter-spacing:1.227px;margin-right:-1.227px;transform-origin:100% 50%;">21803222</span></div>
<div class="c" style="left:281px;top:513px;width:198px;height:22px;background:#f0fde1;"><span class="t" style="left:1px;top:0px;letter-spacing:1.047px;">Prestación de servicios profesionales</span></div>
<div class="c" style="left:481px;top:513px;width:205px;height:22px;background:#f0fde1;"><span class="t" style="left:0.5px;top:0px;letter-spacing:-0.335px;">VARGAS ROJAS JAIRO ALEXANDER</span></div>
<div class="c" style="left:688px;top:513px;width:83px;height:22px;background:#f0fde1;"><span class="t" style="right:1.00px;top:0px;letter-spacing:0.967px;margin-right:-0.967px;transform-origin:100% 50%;">79,710,203.2</span></div>
<div class="c" style="left:773px;top:513px;width:134px;height:22px;background:#f0fde1;"><span class="t" style="right:0.00px;top:0px;letter-spacing:1.118px;margin-right:-1.118px;transform-origin:100% 50%;">29,820,000</span></div>
<div class="c" style="left:909px;top:513px;width:137px;height:22px;background:#f0fde1;"><span class="t" style="right:4.00px;top:0px;letter-spacing:1.118px;margin-right:-1.118px;transform-origin:100% 50%;">55,020,000</span></div>
<div class="c" style="left:1048px;top:513px;width:113px;height:22px;background:#f0fde1;"><span class="t" style="left:1px;top:0px;letter-spacing:0px;"></span></div>
<div class="c" style="left:1163px;top:513px;width:132px;height:22px;background:#f0fde1;"><span class="t" style="left:2px;top:0px;letter-spacing:1.047px;"><u style="letter-spacing:1.047px">2021</u><u style="letter-spacing:-0.3px">CSE</u><u style="letter-spacing:1.047px">2185</u></span></div>
<div class="c" style="left:1297px;top:513px;width:87px;height:22px;background:#f0fde1;"><span class="t" style="left:2px;top:0px;letter-spacing:1.047px;"><u style="letter-spacing:1.047px">27</u><u style="letter-spacing:0;margin:0 2.046px">/</u><u style="letter-spacing:1.047px">08</u><u style="letter-spacing:0;margin:0 2.046px">/</u><u style="letter-spacing:1.047px">2021</u></span></div>
<div class="c" style="left:1386px;top:513px;width:140px;height:22px;background:#f0fde1;"><span class="t" style="right:1.00px;top:0px;letter-spacing:1.118px;margin-right:-1.118px;transform-origin:100% 50%;">23,730,000</span></div>
<div class="c" style="left:1528px;top:513px;width:92px;height:22px;background:#f0fde1;"><span class="t" style="left:-1px;top:0px;letter-spacing:0.04px;">APROBADO</span></div>
<div class="c" style="left:1622px;top:513px;width:188px;height:22px;background:#f0fde1;"><span class="t" style="right:4.00px;top:0px;letter-spacing:1.118px;margin-right:-1.118px;transform-origin:100% 50%;">25,200,000</span></div>
<div class="c" style="left:1812px;top:513px;width:64px;height:22px;background:#f0fde1;"><span class="t" style="left:1px;top:0px;letter-spacing:1.502px;"><u style="letter-spacing:-0.62px">SSGC N</u><u style="letter-spacing:1.502px">o.</u></span></div>
<div style="left:29px;top:535px;width:48px;height:1px;background:#f0f0f0;"></div>
<span class="rn" style="left:29px;top:537px;width:48px;height:22px;">19</span>
<div class="c" style="left:78px;top:537px;width:68px;height:22px;background:#fff;"></div>
<svg style="left:79px;top:538px" width="18.6" height="18.6" viewBox="0 0 18.6 18.6"><rect x=".75" y=".75" width="17.1" height="17.1" fill="#fff" stroke="#2b2b2b" stroke-width="1.5"/><path d="M5.1 5.9 L3.2 8.3 L7.2 12.7 L8.8 12.3 C10.6 8.4 13 5.4 16.7 3 L15.8 2 C12.6 3.7 10 6 8 9 Z" fill="#000"/></svg>
<div class="c" style="left:148px;top:537px;width:62px;height:22px;background:#fff;"><span class="t" style="left:0;width:62px;text-align:center;top:0px;letter-spacing:1.047px;text-indent:1.047px;transform-origin:50% 50%;">2021</span></div>
<div class="c" style="left:213px;top:537px;width:66px;height:22px;background:#fff;"><span class="t" style="right:0.50px;top:0px;letter-spacing:1.227px;margin-right:-1.227px;transform-origin:100% 50%;">21803223</span></div>
<div class="c" style="left:281px;top:537px;width:198px;height:22px;background:#fff;"><span class="t" style="left:1px;top:0px;letter-spacing:1.047px;">Prestación de servicios profesionales</span></div>
<div class="c" style="left:481px;top:537px;width:205px;height:22px;background:#fff;"><span class="t" style="left:0.5px;top:0px;letter-spacing:-0.394px;">MOSQUERA BENAVIDES JOSE LUIS</span></div>
<div class="c" style="left:688px;top:537px;width:83px;height:22px;background:#fff;"><span class="t" style="right:1.00px;top:0px;letter-spacing:0.977px;margin-right:-0.977px;transform-origin:100% 50%;">1,015,420,028.3</span></div>
<div class="c" style="left:773px;top:537px;width:134px;height:22px;background:#fff;"><span class="t" style="right:0.00px;top:0px;letter-spacing:1.118px;margin-right:-1.118px;transform-origin:100% 50%;">35,200,000</span></div>
<div class="c" style="left:909px;top:537px;width:137px;height:22px;background:#fff;"><span class="t" style="right:4.00px;top:0px;letter-spacing:1.118px;margin-right:-1.118px;transform-origin:100% 50%;">67,200,000</span></div>
<div class="c" style="left:1048px;top:537px;width:113px;height:22px;background:#fff;"><span class="t" style="left:1px;top:0px;letter-spacing:0px;"></span></div>
<div class="c" style="left:1163px;top:537px;width:132px;height:22px;background:#fff;"><span class="t" style="left:2px;top:0px;letter-spacing:1.047px;"><u style="letter-spacing:1.047px">2021</u><u style="letter-spacing:-0.3px">CSE</u><u style="letter-spacing:1.047px">2208</u></span></div>
<div class="c" style="left:1297px;top:537px;width:87px;height:22px;background:#fff;"><span class="t" style="left:2px;top:0px;letter-spacing:1.047px;"><u style="letter-spacing:1.047px">27</u><u style="letter-spacing:0;margin:0 2.046px">/</u><u style="letter-spacing:1.047px">08</u><u style="letter-spacing:0;margin:0 2.046px">/</u><u style="letter-spacing:1.047px">2021</u></span></div>
<div class="c" style="left:1386px;top:537px;width:140px;height:22px;background:#fff;"><span class="t" style="right:1.00px;top:0px;letter-spacing:1.118px;margin-right:-1.118px;transform-origin:100% 50%;">27,200,000</span></div>
<div class="c" style="left:1528px;top:537px;width:92px;height:22px;background:#fff;"><span class="t" style="left:-1px;top:0px;letter-spacing:0.04px;">APROBADO</span></div>
<div class="c" style="left:1622px;top:537px;width:188px;height:22px;background:#fff;"><span class="t" style="right:4.00px;top:0px;letter-spacing:1.118px;margin-right:-1.118px;transform-origin:100% 50%;">32,000,000</span></div>
<div class="c" style="left:1812px;top:537px;width:64px;height:22px;background:#fff;"><span class="t" style="left:1px;top:0px;letter-spacing:1.502px;"><u style="letter-spacing:-0.62px">SSGC N</u><u style="letter-spacing:1.502px">o.</u></span></div>
<div style="left:29px;top:559px;width:48px;height:1px;background:#f0f0f0;"></div>
<span class="rn" style="left:29px;top:561px;width:48px;height:22px;">20</span>
<div class="c" style="left:78px;top:561px;width:68px;height:22px;background:#f0fde1;"></div>
<svg style="left:79px;top:562px" width="18.6" height="18.6" viewBox="0 0 18.6 18.6"><rect x=".75" y=".75" width="17.1" height="17.1" fill="#f0fde1" stroke="#2b2b2b" stroke-width="1.5"/><path d="M5.1 5.9 L3.2 8.3 L7.2 12.7 L8.8 12.3 C10.6 8.4 13 5.4 16.7 3 L15.8 2 C12.6 3.7 10 6 8 9 Z" fill="#000"/></svg>
<div class="c" style="left:148px;top:561px;width:62px;height:22px;background:#f0fde1;"><span class="t" style="left:0;width:62px;text-align:center;top:0px;letter-spacing:1.047px;text-indent:1.047px;transform-origin:50% 50%;">2021</span></div>
<div class="c" style="left:213px;top:561px;width:66px;height:22px;background:#f0fde1;"><span class="t" style="right:0.50px;top:0px;letter-spacing:1.227px;margin-right:-1.227px;transform-origin:100% 50%;">21803245</span></div>
<div class="c" style="left:281px;top:561px;width:198px;height:22px;background:#f0fde1;"><span class="t" style="left:1px;top:0px;letter-spacing:1.047px;">Prestación de servicios profesionales</span></div>
<div class="c" style="left:481px;top:561px;width:205px;height:22px;background:#f0fde1;"><span class="t" style="left:0.5px;top:0px;letter-spacing:-0.314px;">PAEZ TRIANA YAER ALIRIO</span></div>
<div class="c" style="left:688px;top:561px;width:83px;height:22px;background:#f0fde1;"><span class="t" style="right:1.00px;top:0px;letter-spacing:0.967px;margin-right:-0.967px;transform-origin:100% 50%;">73,381,865.4</span></div>
<div class="c" style="left:773px;top:561px;width:134px;height:22px;background:#f0fde1;"><span class="t" style="right:0.00px;top:0px;letter-spacing:1.118px;margin-right:-1.118px;transform-origin:100% 50%;">20,800,000</span></div>
<div class="c" style="left:909px;top:561px;width:137px;height:22px;background:#f0fde1;"><span class="t" style="right:4.00px;top:0px;letter-spacing:1.118px;margin-right:-1.118px;transform-origin:100% 50%;">41,600,000</span></div>
<div class="c" style="left:1048px;top:561px;width:113px;height:22px;background:#f0fde1;"><span class="t" style="left:1px;top:0px;letter-spacing:0px;"></span></div>
<div class="c" style="left:1163px;top:561px;width:132px;height:22px;background:#f0fde1;"><span class="t" style="left:2px;top:0px;letter-spacing:1.047px;"><u style="letter-spacing:1.047px">2021</u><u style="letter-spacing:-0.3px">CSE</u><u style="letter-spacing:1.047px">2278</u></span></div>
<div class="c" style="left:1297px;top:561px;width:87px;height:22px;background:#f0fde1;"><span class="t" style="left:2px;top:0px;letter-spacing:1.047px;"><u style="letter-spacing:1.047px">31</u><u style="letter-spacing:0;margin:0 2.046px">/</u><u style="letter-spacing:1.047px">08</u><u style="letter-spacing:0;margin:0 2.046px">/</u><u style="letter-spacing:1.047px">2021</u></span></div>
<div class="c" style="left:1386px;top:561px;width:140px;height:22px;background:#f0fde1;"><span class="t" style="right:1.00px;top:0px;letter-spacing:1.118px;margin-right:-1.118px;transform-origin:100% 50%;">15,600,000</span></div>
<div class="c" style="left:1528px;top:561px;width:92px;height:22px;background:#f0fde1;"><span class="t" style="left:-1px;top:0px;letter-spacing:0.04px;">APROBADO</span></div>
<div class="c" style="left:1622px;top:561px;width:188px;height:22px;background:#f0fde1;"><span class="t" style="right:4.00px;top:0px;letter-spacing:1.118px;margin-right:-1.118px;transform-origin:100% 50%;">20,800,000</span></div>
<div class="c" style="left:1812px;top:561px;width:64px;height:22px;background:#f0fde1;"><span class="t" style="left:1px;top:0px;letter-spacing:1.502px;"><u style="letter-spacing:-0.62px">SSGC N</u><u style="letter-spacing:1.502px">o.</u></span></div>
<div style="left:29px;top:583px;width:48px;height:1px;background:#ececec;"></div>
<div style="left:77px;top:87px;width:1px;height:500px;background:#ececec;"></div>
<span class="rn" style="left:29px;top:587px;width:50px;height:22px;">124</span>
<div class="c" style="left:77px;top:589px;width:69px;height:19px;background:#a5c34a;border-top:2px solid #6e6e6e;border-left:1px solid #6e6e6e;"></div>
<div class="c" style="left:148px;top:589px;width:62px;height:19px;background:#a5c34a;border-top:2px solid #6e6e6e;border-left:1px solid #6e6e6e;"></div>
<div class="c" style="left:213px;top:589px;width:66px;height:19px;background:#a5c34a;border-top:2px solid #6e6e6e;border-left:1px solid #6e6e6e;"></div>
<div class="c" style="left:279px;top:589px;width:200px;height:19px;background:#a5c34a;border-top:2px solid #6e6e6e;border-left:2px solid #767676;"></div>
<div class="c" style="left:479px;top:589px;width:207px;height:19px;background:#a5c34a;border-top:2px solid #6e6e6e;border-left:2px solid #767676;"></div>
<div class="c" style="left:686px;top:589px;width:85px;height:19px;background:#a5c34a;border-top:2px solid #6e6e6e;border-left:2px solid #767676;"></div>
<div class="c" style="left:772px;top:589px;width:136px;height:19px;background:#a5c34a;border:1px solid #9c9ca8;"><span class="n" style="right:0px;top:-1px;font-size:15.5px;line-height:19px;transform-origin:100% 50%;transform:scaleX(.868);">122,611,884,998</span></div>
<div class="c" style="left:908px;top:589px;width:139px;height:19px;background:#a5c34a;border:1px solid #9c9ca8;"><span class="n" style="right:3px;top:-1px;font-size:15.5px;line-height:19px;transform-origin:100% 50%;transform:scaleX(.868);">320,986,567,144</span></div>
<div class="c" style="left:1046px;top:589px;width:115px;height:19px;background:#a5c34a;border-top:2px solid #6e6e6e;border-left:2px solid #767676;"></div>
<div class="c" style="left:1161px;top:589px;width:134px;height:19px;background:#a5c34a;border-top:2px solid #6e6e6e;border-left:2px solid #767676;"></div>
<div class="c" style="left:1295px;top:589px;width:89px;height:19px;background:#a5c34a;border-top:2px solid #6e6e6e;border-left:2px solid #767676;"></div>
<div class="c" style="left:1385px;top:589px;width:142px;height:19px;background:#a5c34a;border:1px solid #9c9ca8;"><span class="n" style="right:1.5px;top:-1px;font-size:15.5px;line-height:19px;transform-origin:100% 50%;transform:scaleX(.868);">111,084,644,927</span></div>
<div class="c" style="left:1526px;top:589px;width:94px;height:19px;background:#a5c34a;border-top:2px solid #6e6e6e;border-left:2px solid #767676;"></div>
<div class="c" style="left:1621px;top:589px;width:190px;height:19px;background:#a5c34a;border:1px solid #9c9ca8;"><span class="n" style="left:0px;top:-1px;font-size:15.5px;line-height:19px;transform:scaleX(.868);">198,374,682,146</span></div>
<div style="left:1877px;top:87px;width:24px;height:525px;background:#f0f0f0;"></div>
<div style="left:1878px;top:108px;width:18px;height:78px;background:#cdcdcd;"></div>
<svg style="left:1882px;top:93px" width="10" height="8" viewBox="0 0 10 8"><path d="M1 6.3 L5 2.1 L9 6.3" fill="none" stroke="#555" stroke-width="2.3"/></svg>
<svg style="left:1882px;top:596px" width="10" height="8" viewBox="0 0 10 8"><path d="M1 1.5 L5 5.7 L9 1.5" fill="none" stroke="#555" stroke-width="2.3"/></svg>
<div style="left:29px;top:611px;width:1872px;height:22px;background:#f0f0f0;"></div>
<div style="left:29px;top:611px;width:6px;height:21px;background:#6e6e6e;"></div>
<div style="left:57px;top:612px;width:1557px;height:18px;background:#cdcdcd;"></div>
<svg style="left:42px;top:616px" width="8" height="10" viewBox="0 0 8 10"><path d="M6.3 1 L2.1 5 L6.3 9" fill="none" stroke="#505050" stroke-width="2.3"/></svg>
<svg style="left:1862px;top:616px" width="8" height="10" viewBox="0 0 8 10"><path d="M1.7 1 L5.9 5 L1.7 9" fill="none" stroke="#505050" stroke-width="2.3"/></svg>
<div style="left:1877px;top:611px;width:21px;height:21px;background:#c9c9c9;"></div>
<div style="left:108px;top:643px;width:1796px;height:14px;background:#e6e6e6;border:1px solid #c6c6c6;"></div>
<div style="left:24px;top:664px;width:1879px;height:160px;background:#fff;border:1px solid #828790;"></div>
<span class="n" style="left:49px;top:666.5px;line-height:20px;transform:scaleX(.88);">2021-11-29 | 03:56:19 pm:></span>
<span class="n" style="left:219px;top:666.5px;line-height:20px;transform:scaleX(.886);">Compromiso N° 21803738: Distribución de rubros cargada correctamente.</span>
<span class="n" style="left:49px;top:686.5px;line-height:20px;transform:scaleX(.88);">2021-11-29 | 03:56:19 pm:></span>
<span class="n" style="left:219px;top:686.5px;line-height:20px;transform:scaleX(.886);">Procesando registro: 122/124 - Agregando carga de homologación para la Orden de Pago N° 21803741 - Código Interno: 45311</span>
<span class="n" style="left:49px;top:706.5px;line-height:20px;transform:scaleX(.88);">2021-11-29 | 03:56:19 pm:></span>
<span class="n" style="left:219px;top:706.5px;line-height:20px;transform:scaleX(.886);">Compromiso N° 21803741: Distribución de rubros cargada correctamente.</span>
<span class="n" style="left:49px;top:726.5px;line-height:20px;transform:scaleX(.88);">2021-11-29 | 03:56:19 pm:></span>
<span class="n" style="left:219px;top:726.5px;line-height:20px;transform:scaleX(.886);">Procesando registro: 123/124 - Agregando carga de homologación para la Orden de Pago N° 21803746 - Código Interno: 45317</span>
<span class="n" style="left:49px;top:746.5px;line-height:20px;transform:scaleX(.88);">2021-11-29 | 03:56:20 pm:></span>
<span class="n" style="left:219px;top:746.5px;line-height:20px;transform:scaleX(.886);">Compromiso N° 21803746: Distribución de rubros cargada correctamente.</span>
<span class="n" style="left:49px;top:766.5px;line-height:20px;transform:scaleX(.88);">2021-11-29 | 03:56:20 pm:></span>
<span class="n" style="left:219px;top:766.5px;line-height:20px;transform:scaleX(.886);">Procesando registro: 124/124 - Agregando carga de homologación para la Orden de Pago N° 21803747 - Código Interno: 45315</span>
<span class="n" style="left:49px;top:786.5px;line-height:20px;transform:scaleX(.88);">2021-11-29 | 03:56:20 pm:></span>
<span class="n" style="left:219px;top:786.5px;line-height:20px;transform:scaleX(.886);">Compromiso N° 21803747: Distribución de rubros cargada correctamente.</span>
<div style="left:1880px;top:666px;width:20px;height:156px;background:#f0f0f0;"></div>
<div style="left:1880px;top:779px;width:19px;height:21px;background:#cdcdcd;"></div>
<svg style="left:1885px;top:674px" width="10" height="8" viewBox="0 0 10 8"><path d="M1 6.3 L5 2.1 L9 6.3" fill="none" stroke="#555" stroke-width="2.3"/></svg>
<svg style="left:1885px;top:808px" width="10" height="8" viewBox="0 0 10 8"><path d="M1 1.5 L5 5.7 L9 1.5" fill="none" stroke="#555" stroke-width="2.3"/></svg>
<div style="left:717px;top:329px;width:480px;height:192px;background:#fff;border-left:1px solid #5d7a86;"></div>
<div style="left:717px;top:329px;width:480px;height:33px;background:#6a797e;"></div>
<span class="n" style="left:722px;top:336px;line-height:20px;color:#fff;font-size:15px;transform:scaleX(.838);">PRESUPUESTO</span>
<svg style="left:1169px;top:340px" width="12" height="12" viewBox="0 0 12 12"><path d="M.5 .5 L11.5 11.5 M11.5 .5 L.5 11.5" stroke="#8b979b" stroke-width="1.1"/></svg>
<div style="left:718px;top:469px;width:479px;height:52px;background:#f0f0f0;"></div>
<svg style="left:745px;top:391px" width="39" height="39" viewBox="0 0 39 39"><circle cx="19.5" cy="19.5" r="18.3" fill="#0063b9" stroke="#0a4f92" stroke-width="1.4"/><g transform="translate(0.3,1.6)"><path d="M13.6 14.6 C13.6 10.6 16.4 8.6 19.6 8.6 C23 8.6 25.6 10.7 25.6 13.8 C25.6 16.4 24 17.8 22.4 19.2 C21 20.4 20.6 21.4 20.6 23.8" fill="none" stroke="#fff" stroke-width="2.8"/><rect x="19" y="26.6" width="3.2" height="3.3" fill="#fff"/></g></svg>
<span style="left:795px;top:391.4px;font-size:13px;line-height:17px;letter-spacing:0.539px;color:#111;">¿Desea realizar el proceso de desmarcación de todos los</span>
<span style="left:795px;top:407.4px;font-size:13px;line-height:17px;letter-spacing:0.6px;color:#111;">registros?</span>
<span style="left:795px;top:424px;font-size:13px;line-height:17px;letter-spacing:0.65px;color:#111;">Este proceso puede demorar varios minutos.</span>
<div style="left:982px;top:481px;width:91px;height:26px;background:#e1e1e1;border:1px solid #adadad;"><span style="left:0;width:89px;text-align:center;top:4px;font-size:13px;line-height:17px;">Sí</span></div>
<div style="left:1086px;top:481px;width:91px;height:26px;background:#e1e1e1;border:2px solid #0078d7;"><span style="left:0;width:87px;text-align:center;top:3px;font-size:13px;line-height:17px;">No</span></div>
</body></html>
